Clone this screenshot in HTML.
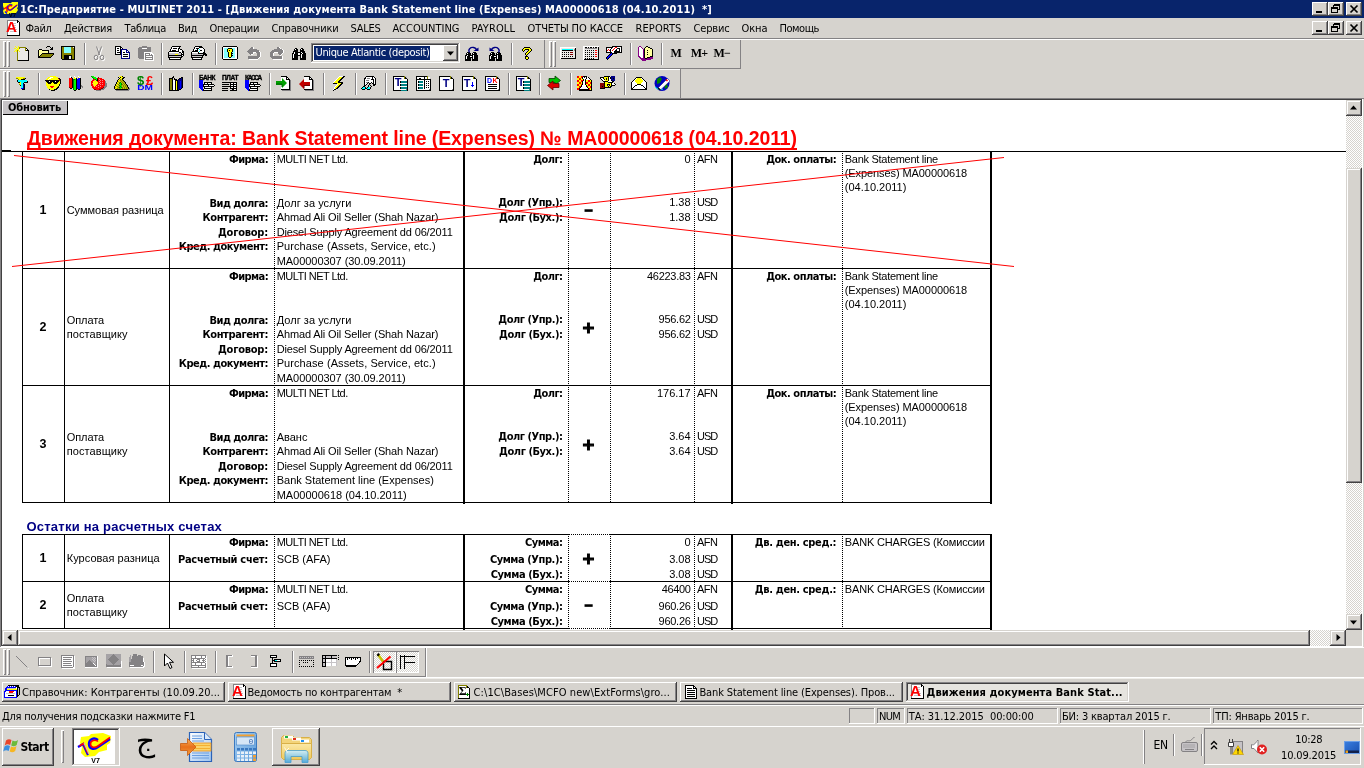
<!DOCTYPE html>
<html><head><meta charset="utf-8"><title>1C</title><style>
html,body{margin:0;padding:0;}
body{width:1364px;height:768px;overflow:hidden;background:#d6d3ce;position:relative;font-family:'DejaVu Sans Condensed','DejaVu Sans','Liberation Sans',sans-serif;font-size:11px;}
.t{position:absolute;white-space:pre;color:#000;}
.r{position:absolute;}
#root{position:absolute;left:0;top:0;width:1364px;height:768px;will-change:transform;}
svg{position:absolute;overflow:visible;}
.raised{box-shadow:inset -1px -1px #424142,inset 1px 1px #fff,inset -2px -2px #848284,inset 2px 2px #d6d3ce;}
.sunken{box-shadow:inset -1px -1px #fff,inset 1px 1px #848284,inset -2px -2px #d6d3ce,inset 2px 2px #424142;}
.sbr{box-shadow:inset -1px -1px #424142,inset 1px 1px #d6d3ce,inset -2px -2px #848284,inset 2px 2px #fff;}
.thinr{box-shadow:inset -1px -1px #848284,inset 1px 1px #fff;}
.thins{box-shadow:inset -1px -1px #fff,inset 1px 1px #848284;}
</style></head><body><div id="root">
<div class="r" style="left:0px;top:0px;width:1364px;height:18px;background:#08246b;"></div>
<span class="t" style="left:20.00px;top:1.70px;line-height:15px;font-size:11px;font-weight:bold;font-family:'DejaVu Sans Condensed','DejaVu Sans','Liberation Sans',sans-serif;color:#fff;letter-spacing:0.097px;">1C:Предприятие - MULTINET 2011 - [Движения документа Bank Statement line (Expenses) MA00000618 (04.10.2011)  *]</span>
<div class="r raised" style="left:1312px;top:2px;width:16px;height:14px;background:#d6d3ce;"></div>
<div class="r" style="left:1316px;top:11px;width:6px;height:2px;background:#000;"></div>
<div class="r raised" style="left:1328px;top:2px;width:16px;height:14px;background:#d6d3ce;"></div>
<svg style="left:1328px;top:2px" width="16" height="14" shape-rendering="crispEdges"><path d="M5.5 2.5h6v5h-2M5.5 3.5h6M5.5 2.5v2" stroke="#000" fill="none"/><path d="M3.5 5.5h6v5h-6zM3.5 6.5h6" stroke="#000" fill="none"/></svg>
<div class="r raised" style="left:1346px;top:2px;width:16px;height:14px;background:#d6d3ce;"></div>
<svg style="left:1346px;top:2px" width="16" height="14"><path d="M4.5 3.5l7 7M11.5 3.5l-7 7" stroke="#000" stroke-width="1.7" fill="none"/></svg>
<div class="r raised" style="left:1312px;top:21px;width:16px;height:14px;background:#d6d3ce;"></div>
<div class="r" style="left:1316px;top:30px;width:6px;height:2px;background:#000;"></div>
<div class="r raised" style="left:1328px;top:21px;width:16px;height:14px;background:#d6d3ce;"></div>
<svg style="left:1328px;top:21px" width="16" height="14" shape-rendering="crispEdges"><path d="M5.5 2.5h6v5h-2M5.5 3.5h6M5.5 2.5v2" stroke="#000" fill="none"/><path d="M3.5 5.5h6v5h-6zM3.5 6.5h6" stroke="#000" fill="none"/></svg>
<div class="r raised" style="left:1346px;top:21px;width:16px;height:14px;background:#d6d3ce;"></div>
<svg style="left:1346px;top:21px" width="16" height="14"><path d="M4.5 3.5l7 7M11.5 3.5l-7 7" stroke="#000" stroke-width="1.7" fill="none"/></svg>
<span class="t" style="left:25.50px;top:20.80px;line-height:15px;font-size:11px;font-family:'DejaVu Sans Condensed','DejaVu Sans','Liberation Sans',sans-serif;letter-spacing:-0.336px;">Файл</span>
<span class="t" style="left:64.00px;top:20.80px;line-height:15px;font-size:11px;font-family:'DejaVu Sans Condensed','DejaVu Sans','Liberation Sans',sans-serif;letter-spacing:-0.209px;">Действия</span>
<span class="t" style="left:124.50px;top:20.80px;line-height:15px;font-size:11px;font-family:'DejaVu Sans Condensed','DejaVu Sans','Liberation Sans',sans-serif;letter-spacing:-0.324px;">Таблица</span>
<span class="t" style="left:178.00px;top:20.80px;line-height:15px;font-size:11px;font-family:'DejaVu Sans Condensed','DejaVu Sans','Liberation Sans',sans-serif;letter-spacing:-0.354px;">Вид</span>
<span class="t" style="left:209.50px;top:20.80px;line-height:15px;font-size:11px;font-family:'DejaVu Sans Condensed','DejaVu Sans','Liberation Sans',sans-serif;letter-spacing:-0.350px;">Операции</span>
<span class="t" style="left:271.50px;top:20.80px;line-height:15px;font-size:11px;font-family:'DejaVu Sans Condensed','DejaVu Sans','Liberation Sans',sans-serif;letter-spacing:-0.162px;">Справочники</span>
<span class="t" style="left:350.50px;top:20.80px;line-height:15px;font-size:11px;font-family:'DejaVu Sans Condensed','DejaVu Sans','Liberation Sans',sans-serif;letter-spacing:-0.263px;">SALES</span>
<span class="t" style="left:392.50px;top:20.80px;line-height:15px;font-size:11px;font-family:'DejaVu Sans Condensed','DejaVu Sans','Liberation Sans',sans-serif;letter-spacing:0.013px;">ACCOUNTING</span>
<span class="t" style="left:471.50px;top:20.80px;line-height:15px;font-size:11px;font-family:'DejaVu Sans Condensed','DejaVu Sans','Liberation Sans',sans-serif;letter-spacing:0.085px;">PAYROLL</span>
<span class="t" style="left:527.50px;top:20.80px;line-height:15px;font-size:11px;font-family:'DejaVu Sans Condensed','DejaVu Sans','Liberation Sans',sans-serif;letter-spacing:-0.102px;">ОТЧЕТЫ ПО КАССЕ</span>
<span class="t" style="left:635.50px;top:20.80px;line-height:15px;font-size:11px;font-family:'DejaVu Sans Condensed','DejaVu Sans','Liberation Sans',sans-serif;letter-spacing:0.100px;">REPORTS</span>
<span class="t" style="left:693.50px;top:20.80px;line-height:15px;font-size:11px;font-family:'DejaVu Sans Condensed','DejaVu Sans','Liberation Sans',sans-serif;letter-spacing:-0.167px;">Сервис</span>
<span class="t" style="left:741.50px;top:20.80px;line-height:15px;font-size:11px;font-family:'DejaVu Sans Condensed','DejaVu Sans','Liberation Sans',sans-serif;letter-spacing:-0.078px;">Окна</span>
<span class="t" style="left:779.50px;top:20.80px;line-height:15px;font-size:11px;font-family:'DejaVu Sans Condensed','DejaVu Sans','Liberation Sans',sans-serif;letter-spacing:-0.448px;">Помощь</span>
<div class="r" style="left:0px;top:38px;width:1364px;height:1px;background:#848284;"></div>
<div class="r" style="left:0px;top:39px;width:1364px;height:1px;background:#fff;"></div>
<div class="r" style="left:3px;top:41px;width:3px;height:26px;background:#d6d3ce;box-shadow:inset 1px 1px #fff,inset -1px -1px #848284;"></div>
<div class="r" style="left:7px;top:41px;width:3px;height:26px;background:#d6d3ce;box-shadow:inset 1px 1px #fff,inset -1px -1px #848284;"></div>
<div class="r" style="left:84px;top:43px;width:1px;height:22px;background:#848284;"></div>
<div class="r" style="left:85px;top:43px;width:1px;height:22px;background:#fff;"></div>
<div class="r" style="left:161px;top:43px;width:1px;height:22px;background:#848284;"></div>
<div class="r" style="left:162px;top:43px;width:1px;height:22px;background:#fff;"></div>
<div class="r" style="left:215px;top:43px;width:1px;height:22px;background:#848284;"></div>
<div class="r" style="left:216px;top:43px;width:1px;height:22px;background:#fff;"></div>
<div class="r" style="left:511px;top:43px;width:1px;height:22px;background:#848284;"></div>
<div class="r" style="left:512px;top:43px;width:1px;height:22px;background:#fff;"></div>
<div class="r" style="left:544px;top:40px;width:1px;height:28px;background:#848284;"></div>
<div class="r" style="left:549px;top:41px;width:3px;height:26px;background:#d6d3ce;box-shadow:inset 1px 1px #fff,inset -1px -1px #848284;"></div>
<div class="r" style="left:553px;top:41px;width:3px;height:26px;background:#d6d3ce;box-shadow:inset 1px 1px #fff,inset -1px -1px #848284;"></div>
<div class="r" style="left:630px;top:43px;width:1px;height:22px;background:#848284;"></div>
<div class="r" style="left:631px;top:43px;width:1px;height:22px;background:#fff;"></div>
<div class="r" style="left:661px;top:43px;width:1px;height:22px;background:#848284;"></div>
<div class="r" style="left:662px;top:43px;width:1px;height:22px;background:#fff;"></div>
<div class="r" style="left:740px;top:40px;width:1px;height:29px;background:#848284;"></div>
<div class="r" style="left:0px;top:68px;width:741px;height:1px;background:#848284;"></div>
<div class="r" style="left:0px;top:69px;width:680px;height:1px;background:#fff;"></div>
<div class="r" style="left:3px;top:71px;width:3px;height:26px;background:#d6d3ce;box-shadow:inset 1px 1px #fff,inset -1px -1px #848284;"></div>
<div class="r" style="left:7px;top:71px;width:3px;height:26px;background:#d6d3ce;box-shadow:inset 1px 1px #fff,inset -1px -1px #848284;"></div>
<div class="r" style="left:38px;top:73px;width:1px;height:22px;background:#848284;"></div>
<div class="r" style="left:39px;top:73px;width:1px;height:22px;background:#fff;"></div>
<div class="r" style="left:161px;top:73px;width:1px;height:22px;background:#848284;"></div>
<div class="r" style="left:162px;top:73px;width:1px;height:22px;background:#fff;"></div>
<div class="r" style="left:192px;top:73px;width:1px;height:22px;background:#848284;"></div>
<div class="r" style="left:193px;top:73px;width:1px;height:22px;background:#fff;"></div>
<div class="r" style="left:269px;top:73px;width:1px;height:22px;background:#848284;"></div>
<div class="r" style="left:270px;top:73px;width:1px;height:22px;background:#fff;"></div>
<div class="r" style="left:323px;top:73px;width:1px;height:22px;background:#848284;"></div>
<div class="r" style="left:324px;top:73px;width:1px;height:22px;background:#fff;"></div>
<div class="r" style="left:355px;top:73px;width:1px;height:22px;background:#848284;"></div>
<div class="r" style="left:356px;top:73px;width:1px;height:22px;background:#fff;"></div>
<div class="r" style="left:385px;top:73px;width:1px;height:22px;background:#848284;"></div>
<div class="r" style="left:386px;top:73px;width:1px;height:22px;background:#fff;"></div>
<div class="r" style="left:508px;top:73px;width:1px;height:22px;background:#848284;"></div>
<div class="r" style="left:509px;top:73px;width:1px;height:22px;background:#fff;"></div>
<div class="r" style="left:539px;top:73px;width:1px;height:22px;background:#848284;"></div>
<div class="r" style="left:540px;top:73px;width:1px;height:22px;background:#fff;"></div>
<div class="r" style="left:570px;top:73px;width:1px;height:22px;background:#848284;"></div>
<div class="r" style="left:571px;top:73px;width:1px;height:22px;background:#fff;"></div>
<div class="r" style="left:624px;top:73px;width:1px;height:22px;background:#848284;"></div>
<div class="r" style="left:625px;top:73px;width:1px;height:22px;background:#fff;"></div>
<div class="r" style="left:680px;top:69px;width:1px;height:29px;background:#848284;"></div>
<div class="r" style="left:0px;top:98px;width:1364px;height:1px;background:#848284;"></div>
<div class="r" style="left:0px;top:98px;width:1364px;height:1px;background:#848284;"></div>
<div class="r" style="left:0px;top:99px;width:1363px;height:1px;background:#424142;"></div>
<div class="r" style="left:0px;top:98px;width:1px;height:549px;background:#848284;"></div>
<div class="r" style="left:1px;top:99px;width:1px;height:547px;background:#424142;"></div>
<div class="r" style="left:2px;top:100px;width:1344px;height:530px;background:#fff;"></div>
<div class="r" style="left:1362px;top:99px;width:1px;height:548px;background:#fff;"></div>
<div class="r" style="left:1px;top:646px;width:1362px;height:1px;background:#fff;"></div>
<div class="r" style="left:2px;top:100px;width:66px;height:15px;background:#c6c3c6;box-shadow:inset 1px 1px #fff,inset -1px -1px #000;"></div>
<span class="t" style="left:8.00px;top:99.70px;line-height:15px;font-size:11px;font-weight:bold;font-family:'DejaVu Sans Condensed','DejaVu Sans','Liberation Sans',sans-serif;letter-spacing:-0.145px;">Обновить</span>
<span class="t" style="left:27.00px;top:127.45px;line-height:23.5px;font-size:19.5px;font-weight:bold;font-family:'Liberation Sans',sans-serif;color:#f00;letter-spacing:-0.096px;">Движения документа: Bank Statement line (Expenses) № MA00000618 (04.10.2011)</span>
<div class="r" style="left:27px;top:148px;width:770px;height:2px;background:#f00;"></div>
<div class="r" style="left:2px;top:151px;width:1344px;height:1px;background:#000;"></div>
<div class="r" style="left:2px;top:150px;width:9px;height:2px;background:#000;"></div>
<div class="r" style="left:22px;top:151px;width:1px;height:352px;background:#000;"></div>
<div class="r" style="left:64px;top:151px;width:1px;height:352px;background:#000;"></div>
<div class="r" style="left:169px;top:151px;width:1px;height:352px;background:#000;"></div>
<div class="r" style="left:463px;top:151px;width:2px;height:353px;background:#000;"></div>
<div class="r" style="left:731px;top:151px;width:2px;height:353px;background:#000;"></div>
<div class="r" style="left:990px;top:151px;width:2px;height:353px;background:#000;"></div>
<div class="r" style="left:274px;top:151px;width:1px;height:352px;background:repeating-linear-gradient(to bottom,#000 0 1px,#fff 1px 2px);"></div>
<div class="r" style="left:568px;top:151px;width:1px;height:352px;background:repeating-linear-gradient(to bottom,#000 0 1px,#fff 1px 2px);"></div>
<div class="r" style="left:610px;top:151px;width:1px;height:352px;background:repeating-linear-gradient(to bottom,#000 0 1px,#fff 1px 2px);"></div>
<div class="r" style="left:694px;top:151px;width:1px;height:352px;background:repeating-linear-gradient(to bottom,#000 0 1px,#fff 1px 2px);"></div>
<div class="r" style="left:842px;top:151px;width:1px;height:352px;background:repeating-linear-gradient(to bottom,#000 0 1px,#fff 1px 2px);"></div>
<div class="r" style="left:22px;top:268px;width:970px;height:1px;background:#000;"></div>
<div class="r" style="left:22px;top:385px;width:970px;height:1px;background:#000;"></div>
<div class="r" style="left:22px;top:502px;width:970px;height:1px;background:#000;"></div>
<div class="r" style="left:22px;top:151px;width:970px;height:1px;background:#000;"></div>
<span class="t" style="left:39.42px;top:202.05px;line-height:16.5px;font-size:12.5px;font-weight:bold;font-family:'Liberation Sans',sans-serif;">1</span>
<span class="t" style="left:66.70px;top:202.80px;line-height:15px;font-size:11px;font-family:'Liberation Sans',sans-serif;letter-spacing:-0.014px;">Суммовая разница</span>
<span class="t" style="left:229.00px;top:151.80px;line-height:15px;font-size:11px;font-weight:bold;font-family:'DejaVu Sans Condensed','DejaVu Sans','Liberation Sans',sans-serif;letter-spacing:-0.594px;">Фирма:</span>
<span class="t" style="left:276.70px;top:151.80px;line-height:15px;font-size:11px;font-family:'Liberation Sans',sans-serif;letter-spacing:-0.532px;">MULTI NET Ltd.</span>
<span class="t" style="left:209.60px;top:195.60px;line-height:15px;font-size:11px;font-weight:bold;font-family:'DejaVu Sans Condensed','DejaVu Sans','Liberation Sans',sans-serif;letter-spacing:-0.537px;">Вид долга:</span>
<span class="t" style="left:276.70px;top:195.60px;line-height:15px;font-size:11px;font-family:'Liberation Sans',sans-serif;letter-spacing:0.042px;">Долг за услуги</span>
<span class="t" style="left:202.50px;top:210.20px;line-height:15px;font-size:11px;font-weight:bold;font-family:'DejaVu Sans Condensed','DejaVu Sans','Liberation Sans',sans-serif;letter-spacing:-0.378px;">Контрагент:</span>
<span class="t" style="left:276.70px;top:210.20px;line-height:15px;font-size:11px;font-family:'Liberation Sans',sans-serif;letter-spacing:-0.124px;">Ahmad Ali Oil Seller (Shah Nazar)</span>
<span class="t" style="left:218.00px;top:224.80px;line-height:15px;font-size:11px;font-weight:bold;font-family:'DejaVu Sans Condensed','DejaVu Sans','Liberation Sans',sans-serif;letter-spacing:-0.213px;">Договор:</span>
<span class="t" style="left:276.70px;top:224.80px;line-height:15px;font-size:11px;font-family:'Liberation Sans',sans-serif;letter-spacing:-0.144px;">Diesel Supply Agreement dd 06/2011</span>
<span class="t" style="left:178.80px;top:239.40px;line-height:15px;font-size:11px;font-weight:bold;font-family:'DejaVu Sans Condensed','DejaVu Sans','Liberation Sans',sans-serif;letter-spacing:-0.479px;">Кред. документ:</span>
<span class="t" style="left:276.70px;top:239.40px;line-height:15px;font-size:11px;font-family:'Liberation Sans',sans-serif;letter-spacing:0.078px;">Purchase (Assets, Service, etc.)</span>
<span class="t" style="left:276.70px;top:254.00px;line-height:15px;font-size:11px;font-family:'Liberation Sans',sans-serif;letter-spacing:-0.046px;">MA00000307 (30.09.2011)</span>
<span class="t" style="left:533.20px;top:151.80px;line-height:15px;font-size:11px;font-weight:bold;font-family:'DejaVu Sans Condensed','DejaVu Sans','Liberation Sans',sans-serif;letter-spacing:-0.540px;">Долг:</span>
<span class="t" style="left:498.30px;top:195.30px;line-height:15px;font-size:11px;font-weight:bold;font-family:'DejaVu Sans Condensed','DejaVu Sans','Liberation Sans',sans-serif;letter-spacing:-0.468px;">Долг (Упр.):</span>
<span class="t" style="left:499.10px;top:209.90px;line-height:15px;font-size:11px;font-weight:bold;font-family:'DejaVu Sans Condensed','DejaVu Sans','Liberation Sans',sans-serif;letter-spacing:-0.435px;">Долг (Бух.):</span>
<span class="t" style="left:684.48px;top:151.80px;line-height:15px;font-size:11px;font-family:'Liberation Sans',sans-serif;">0</span>
<span class="t" style="left:669.18px;top:195.30px;line-height:15px;font-size:11px;font-family:'Liberation Sans',sans-serif;">1.38</span>
<span class="t" style="left:669.18px;top:209.90px;line-height:15px;font-size:11px;font-family:'Liberation Sans',sans-serif;">1.38</span>
<span class="t" style="left:697.00px;top:151.80px;line-height:15px;font-size:11px;font-family:'Liberation Sans',sans-serif;letter-spacing:-0.533px;">AFN</span>
<span class="t" style="left:697.00px;top:195.30px;line-height:15px;font-size:11px;font-family:'Liberation Sans',sans-serif;letter-spacing:-1.011px;">USD</span>
<span class="t" style="left:697.00px;top:209.90px;line-height:15px;font-size:11px;font-family:'Liberation Sans',sans-serif;letter-spacing:-1.011px;">USD</span>
<span class="t" style="left:583.89px;top:203.30px;line-height:15px;font-size:11px;font-weight:bold;font-family:'DejaVu Sans',sans-serif;-webkit-text-stroke:1.3px #000;">−</span>
<span class="t" style="left:766.20px;top:151.80px;line-height:15px;font-size:11px;font-weight:bold;font-family:'DejaVu Sans Condensed','DejaVu Sans','Liberation Sans',sans-serif;letter-spacing:-0.479px;">Док. оплаты:</span>
<span class="t" style="left:844.80px;top:151.80px;line-height:15px;font-size:11px;font-family:'Liberation Sans',sans-serif;letter-spacing:-0.287px;">Bank Statement line</span>
<span class="t" style="left:844.80px;top:165.80px;line-height:15px;font-size:11px;font-family:'Liberation Sans',sans-serif;letter-spacing:-0.088px;">(Expenses) MA00000618</span>
<span class="t" style="left:844.80px;top:179.80px;line-height:15px;font-size:11px;font-family:'Liberation Sans',sans-serif;letter-spacing:0.002px;">(04.10.2011)</span>
<span class="t" style="left:39.42px;top:319.05px;line-height:16.5px;font-size:12.5px;font-weight:bold;font-family:'Liberation Sans',sans-serif;">2</span>
<span class="t" style="left:66.70px;top:312.80px;line-height:15px;font-size:11px;font-family:'Liberation Sans',sans-serif;letter-spacing:-0.057px;">Оплата</span>
<span class="t" style="left:66.70px;top:326.80px;line-height:15px;font-size:11px;font-family:'Liberation Sans',sans-serif;letter-spacing:0.091px;">поставщику</span>
<span class="t" style="left:229.00px;top:268.80px;line-height:15px;font-size:11px;font-weight:bold;font-family:'DejaVu Sans Condensed','DejaVu Sans','Liberation Sans',sans-serif;letter-spacing:-0.594px;">Фирма:</span>
<span class="t" style="left:276.70px;top:268.80px;line-height:15px;font-size:11px;font-family:'Liberation Sans',sans-serif;letter-spacing:-0.532px;">MULTI NET Ltd.</span>
<span class="t" style="left:209.60px;top:312.60px;line-height:15px;font-size:11px;font-weight:bold;font-family:'DejaVu Sans Condensed','DejaVu Sans','Liberation Sans',sans-serif;letter-spacing:-0.537px;">Вид долга:</span>
<span class="t" style="left:276.70px;top:312.60px;line-height:15px;font-size:11px;font-family:'Liberation Sans',sans-serif;letter-spacing:0.042px;">Долг за услуги</span>
<span class="t" style="left:202.50px;top:327.20px;line-height:15px;font-size:11px;font-weight:bold;font-family:'DejaVu Sans Condensed','DejaVu Sans','Liberation Sans',sans-serif;letter-spacing:-0.378px;">Контрагент:</span>
<span class="t" style="left:276.70px;top:327.20px;line-height:15px;font-size:11px;font-family:'Liberation Sans',sans-serif;letter-spacing:-0.124px;">Ahmad Ali Oil Seller (Shah Nazar)</span>
<span class="t" style="left:218.00px;top:341.80px;line-height:15px;font-size:11px;font-weight:bold;font-family:'DejaVu Sans Condensed','DejaVu Sans','Liberation Sans',sans-serif;letter-spacing:-0.213px;">Договор:</span>
<span class="t" style="left:276.70px;top:341.80px;line-height:15px;font-size:11px;font-family:'Liberation Sans',sans-serif;letter-spacing:-0.144px;">Diesel Supply Agreement dd 06/2011</span>
<span class="t" style="left:178.80px;top:356.40px;line-height:15px;font-size:11px;font-weight:bold;font-family:'DejaVu Sans Condensed','DejaVu Sans','Liberation Sans',sans-serif;letter-spacing:-0.479px;">Кред. документ:</span>
<span class="t" style="left:276.70px;top:356.40px;line-height:15px;font-size:11px;font-family:'Liberation Sans',sans-serif;letter-spacing:0.078px;">Purchase (Assets, Service, etc.)</span>
<span class="t" style="left:276.70px;top:371.00px;line-height:15px;font-size:11px;font-family:'Liberation Sans',sans-serif;letter-spacing:-0.046px;">MA00000307 (30.09.2011)</span>
<span class="t" style="left:533.20px;top:268.80px;line-height:15px;font-size:11px;font-weight:bold;font-family:'DejaVu Sans Condensed','DejaVu Sans','Liberation Sans',sans-serif;letter-spacing:-0.540px;">Долг:</span>
<span class="t" style="left:498.30px;top:312.30px;line-height:15px;font-size:11px;font-weight:bold;font-family:'DejaVu Sans Condensed','DejaVu Sans','Liberation Sans',sans-serif;letter-spacing:-0.468px;">Долг (Упр.):</span>
<span class="t" style="left:499.10px;top:326.90px;line-height:15px;font-size:11px;font-weight:bold;font-family:'DejaVu Sans Condensed','DejaVu Sans','Liberation Sans',sans-serif;letter-spacing:-0.435px;">Долг (Бух.):</span>
<span class="t" style="left:647.00px;top:268.80px;line-height:15px;font-size:11px;font-family:'Liberation Sans',sans-serif;letter-spacing:-0.286px;">46223.83</span>
<span class="t" style="left:658.60px;top:312.30px;line-height:15px;font-size:11px;font-family:'Liberation Sans',sans-serif;letter-spacing:-0.276px;">956.62</span>
<span class="t" style="left:658.60px;top:326.90px;line-height:15px;font-size:11px;font-family:'Liberation Sans',sans-serif;letter-spacing:-0.276px;">956.62</span>
<span class="t" style="left:697.00px;top:268.80px;line-height:15px;font-size:11px;font-family:'Liberation Sans',sans-serif;letter-spacing:-0.533px;">AFN</span>
<span class="t" style="left:697.00px;top:312.30px;line-height:15px;font-size:11px;font-family:'Liberation Sans',sans-serif;letter-spacing:-1.011px;">USD</span>
<span class="t" style="left:697.00px;top:326.90px;line-height:15px;font-size:11px;font-family:'Liberation Sans',sans-serif;letter-spacing:-1.011px;">USD</span>
<span class="t" style="left:581.80px;top:317.80px;line-height:20px;font-size:16px;font-weight:bold;font-family:'DejaVu Sans',sans-serif;-webkit-text-stroke:1.1px #000;">+</span>
<span class="t" style="left:766.20px;top:268.80px;line-height:15px;font-size:11px;font-weight:bold;font-family:'DejaVu Sans Condensed','DejaVu Sans','Liberation Sans',sans-serif;letter-spacing:-0.479px;">Док. оплаты:</span>
<span class="t" style="left:844.80px;top:268.80px;line-height:15px;font-size:11px;font-family:'Liberation Sans',sans-serif;letter-spacing:-0.287px;">Bank Statement line</span>
<span class="t" style="left:844.80px;top:282.80px;line-height:15px;font-size:11px;font-family:'Liberation Sans',sans-serif;letter-spacing:-0.088px;">(Expenses) MA00000618</span>
<span class="t" style="left:844.80px;top:296.80px;line-height:15px;font-size:11px;font-family:'Liberation Sans',sans-serif;letter-spacing:0.002px;">(04.10.2011)</span>
<span class="t" style="left:39.42px;top:436.05px;line-height:16.5px;font-size:12.5px;font-weight:bold;font-family:'Liberation Sans',sans-serif;">3</span>
<span class="t" style="left:66.70px;top:429.80px;line-height:15px;font-size:11px;font-family:'Liberation Sans',sans-serif;letter-spacing:-0.057px;">Оплата</span>
<span class="t" style="left:66.70px;top:443.80px;line-height:15px;font-size:11px;font-family:'Liberation Sans',sans-serif;letter-spacing:0.091px;">поставщику</span>
<span class="t" style="left:229.00px;top:385.80px;line-height:15px;font-size:11px;font-weight:bold;font-family:'DejaVu Sans Condensed','DejaVu Sans','Liberation Sans',sans-serif;letter-spacing:-0.594px;">Фирма:</span>
<span class="t" style="left:276.70px;top:385.80px;line-height:15px;font-size:11px;font-family:'Liberation Sans',sans-serif;letter-spacing:-0.532px;">MULTI NET Ltd.</span>
<span class="t" style="left:209.60px;top:429.60px;line-height:15px;font-size:11px;font-weight:bold;font-family:'DejaVu Sans Condensed','DejaVu Sans','Liberation Sans',sans-serif;letter-spacing:-0.537px;">Вид долга:</span>
<span class="t" style="left:276.70px;top:429.60px;line-height:15px;font-size:11px;font-family:'Liberation Sans',sans-serif;">Аванс</span>
<span class="t" style="left:202.50px;top:444.20px;line-height:15px;font-size:11px;font-weight:bold;font-family:'DejaVu Sans Condensed','DejaVu Sans','Liberation Sans',sans-serif;letter-spacing:-0.378px;">Контрагент:</span>
<span class="t" style="left:276.70px;top:444.20px;line-height:15px;font-size:11px;font-family:'Liberation Sans',sans-serif;letter-spacing:-0.124px;">Ahmad Ali Oil Seller (Shah Nazar)</span>
<span class="t" style="left:218.00px;top:458.80px;line-height:15px;font-size:11px;font-weight:bold;font-family:'DejaVu Sans Condensed','DejaVu Sans','Liberation Sans',sans-serif;letter-spacing:-0.213px;">Договор:</span>
<span class="t" style="left:276.70px;top:458.80px;line-height:15px;font-size:11px;font-family:'Liberation Sans',sans-serif;letter-spacing:-0.144px;">Diesel Supply Agreement dd 06/2011</span>
<span class="t" style="left:178.80px;top:473.40px;line-height:15px;font-size:11px;font-weight:bold;font-family:'DejaVu Sans Condensed','DejaVu Sans','Liberation Sans',sans-serif;letter-spacing:-0.479px;">Кред. документ:</span>
<span class="t" style="left:276.70px;top:473.40px;line-height:15px;font-size:11px;font-family:'Liberation Sans',sans-serif;">Bank Statement line (Expenses)</span>
<span class="t" style="left:276.70px;top:488.00px;line-height:15px;font-size:11px;font-family:'Liberation Sans',sans-serif;">MA00000618 (04.10.2011)</span>
<span class="t" style="left:533.20px;top:385.80px;line-height:15px;font-size:11px;font-weight:bold;font-family:'DejaVu Sans Condensed','DejaVu Sans','Liberation Sans',sans-serif;letter-spacing:-0.540px;">Долг:</span>
<span class="t" style="left:498.30px;top:429.30px;line-height:15px;font-size:11px;font-weight:bold;font-family:'DejaVu Sans Condensed','DejaVu Sans','Liberation Sans',sans-serif;letter-spacing:-0.468px;">Долг (Упр.):</span>
<span class="t" style="left:499.10px;top:443.90px;line-height:15px;font-size:11px;font-weight:bold;font-family:'DejaVu Sans Condensed','DejaVu Sans','Liberation Sans',sans-serif;letter-spacing:-0.435px;">Долг (Бух.):</span>
<span class="t" style="left:656.94px;top:385.80px;line-height:15px;font-size:11px;font-family:'Liberation Sans',sans-serif;">176.17</span>
<span class="t" style="left:669.18px;top:429.30px;line-height:15px;font-size:11px;font-family:'Liberation Sans',sans-serif;">3.64</span>
<span class="t" style="left:669.18px;top:443.90px;line-height:15px;font-size:11px;font-family:'Liberation Sans',sans-serif;">3.64</span>
<span class="t" style="left:697.00px;top:385.80px;line-height:15px;font-size:11px;font-family:'Liberation Sans',sans-serif;letter-spacing:-0.533px;">AFN</span>
<span class="t" style="left:697.00px;top:429.30px;line-height:15px;font-size:11px;font-family:'Liberation Sans',sans-serif;letter-spacing:-1.011px;">USD</span>
<span class="t" style="left:697.00px;top:443.90px;line-height:15px;font-size:11px;font-family:'Liberation Sans',sans-serif;letter-spacing:-1.011px;">USD</span>
<span class="t" style="left:581.80px;top:434.80px;line-height:20px;font-size:16px;font-weight:bold;font-family:'DejaVu Sans',sans-serif;-webkit-text-stroke:1.1px #000;">+</span>
<span class="t" style="left:766.20px;top:385.80px;line-height:15px;font-size:11px;font-weight:bold;font-family:'DejaVu Sans Condensed','DejaVu Sans','Liberation Sans',sans-serif;letter-spacing:-0.479px;">Док. оплаты:</span>
<span class="t" style="left:844.80px;top:385.80px;line-height:15px;font-size:11px;font-family:'Liberation Sans',sans-serif;letter-spacing:-0.287px;">Bank Statement line</span>
<span class="t" style="left:844.80px;top:399.80px;line-height:15px;font-size:11px;font-family:'Liberation Sans',sans-serif;letter-spacing:-0.088px;">(Expenses) MA00000618</span>
<span class="t" style="left:844.80px;top:413.80px;line-height:15px;font-size:11px;font-family:'Liberation Sans',sans-serif;letter-spacing:0.002px;">(04.10.2011)</span>
<svg style="left:0;top:0" width="1364" height="768"><path d="M14 155.5L1014 266.5M12 266.5L1004 157.5" stroke="#f00" stroke-width="1" fill="none"/></svg>
<span class="t" style="left:26.40px;top:518.20px;line-height:17px;font-size:13px;font-weight:bold;font-family:'Liberation Sans',sans-serif;color:#000084;letter-spacing:0.238px;">Остатки на расчетных счетах</span>
<div class="r" style="left:22px;top:534px;width:1px;height:95px;background:#000;"></div>
<div class="r" style="left:64px;top:534px;width:1px;height:95px;background:#000;"></div>
<div class="r" style="left:169px;top:534px;width:1px;height:95px;background:#000;"></div>
<div class="r" style="left:463px;top:534px;width:2px;height:96px;background:#000;"></div>
<div class="r" style="left:731px;top:534px;width:2px;height:96px;background:#000;"></div>
<div class="r" style="left:990px;top:534px;width:2px;height:96px;background:#000;"></div>
<div class="r" style="left:274px;top:534px;width:1px;height:95px;background:repeating-linear-gradient(to bottom,#000 0 1px,#fff 1px 2px);"></div>
<div class="r" style="left:568px;top:534px;width:1px;height:95px;background:repeating-linear-gradient(to bottom,#000 0 1px,#fff 1px 2px);"></div>
<div class="r" style="left:610px;top:534px;width:1px;height:95px;background:repeating-linear-gradient(to bottom,#000 0 1px,#fff 1px 2px);"></div>
<div class="r" style="left:694px;top:534px;width:1px;height:95px;background:repeating-linear-gradient(to bottom,#000 0 1px,#fff 1px 2px);"></div>
<div class="r" style="left:842px;top:534px;width:1px;height:95px;background:repeating-linear-gradient(to bottom,#000 0 1px,#fff 1px 2px);"></div>
<div class="r" style="left:22px;top:581px;width:970px;height:1px;background:#000;"></div>
<div class="r" style="left:22px;top:628px;width:970px;height:1px;background:#000;"></div>
<div class="r" style="left:22px;top:534px;width:970px;height:1px;background:#000;"></div>
<div class="r" style="left:569px;top:534px;width:41px;height:1px;background:repeating-linear-gradient(to right,#000 0 1px,#fff 1px 2px);"></div>
<div class="r" style="left:569px;top:581px;width:41px;height:1px;background:repeating-linear-gradient(to right,#000 0 1px,#fff 1px 2px);"></div>
<div class="r" style="left:569px;top:628px;width:41px;height:1px;background:repeating-linear-gradient(to right,#000 0 1px,#fff 1px 2px);"></div>
<span class="t" style="left:39.42px;top:550.05px;line-height:16.5px;font-size:12.5px;font-weight:bold;font-family:'Liberation Sans',sans-serif;">1</span>
<span class="t" style="left:66.70px;top:551.00px;line-height:15px;font-size:11px;font-family:'Liberation Sans',sans-serif;letter-spacing:0.044px;">Курсовая разница</span>
<span class="t" style="left:229.00px;top:534.80px;line-height:15px;font-size:11px;font-weight:bold;font-family:'DejaVu Sans Condensed','DejaVu Sans','Liberation Sans',sans-serif;letter-spacing:-0.594px;">Фирма:</span>
<span class="t" style="left:276.70px;top:534.80px;line-height:15px;font-size:11px;font-family:'Liberation Sans',sans-serif;letter-spacing:-0.532px;">MULTI NET Ltd.</span>
<span class="t" style="left:178.00px;top:551.80px;line-height:15px;font-size:11px;font-weight:bold;font-family:'DejaVu Sans Condensed','DejaVu Sans','Liberation Sans',sans-serif;letter-spacing:-0.285px;">Расчетный счет:</span>
<span class="t" style="left:276.70px;top:551.80px;line-height:15px;font-size:11px;font-family:'Liberation Sans',sans-serif;">SCB (AFA)</span>
<span class="t" style="left:525.00px;top:534.80px;line-height:15px;font-size:11px;font-weight:bold;font-family:'DejaVu Sans Condensed','DejaVu Sans','Liberation Sans',sans-serif;letter-spacing:-0.505px;">Сумма:</span>
<span class="t" style="left:489.90px;top:551.80px;line-height:15px;font-size:11px;font-weight:bold;font-family:'DejaVu Sans Condensed','DejaVu Sans','Liberation Sans',sans-serif;letter-spacing:-0.441px;">Сумма (Упр.):</span>
<span class="t" style="left:490.70px;top:566.80px;line-height:15px;font-size:11px;font-weight:bold;font-family:'DejaVu Sans Condensed','DejaVu Sans','Liberation Sans',sans-serif;letter-spacing:-0.412px;">Сумма (Бух.):</span>
<span class="t" style="left:684.48px;top:534.80px;line-height:15px;font-size:11px;font-family:'Liberation Sans',sans-serif;">0</span>
<span class="t" style="left:669.18px;top:551.80px;line-height:15px;font-size:11px;font-family:'Liberation Sans',sans-serif;">3.08</span>
<span class="t" style="left:669.18px;top:566.80px;line-height:15px;font-size:11px;font-family:'Liberation Sans',sans-serif;">3.08</span>
<span class="t" style="left:697.00px;top:534.80px;line-height:15px;font-size:11px;font-family:'Liberation Sans',sans-serif;letter-spacing:-0.533px;">AFN</span>
<span class="t" style="left:697.00px;top:551.80px;line-height:15px;font-size:11px;font-family:'Liberation Sans',sans-serif;letter-spacing:-1.011px;">USD</span>
<span class="t" style="left:697.00px;top:566.80px;line-height:15px;font-size:11px;font-family:'Liberation Sans',sans-serif;letter-spacing:-1.011px;">USD</span>
<span class="t" style="left:581.80px;top:548.80px;line-height:20px;font-size:16px;font-weight:bold;font-family:'DejaVu Sans',sans-serif;-webkit-text-stroke:1.1px #000;">+</span>
<span class="t" style="left:754.80px;top:534.80px;line-height:15px;font-size:11px;font-weight:bold;font-family:'DejaVu Sans Condensed','DejaVu Sans','Liberation Sans',sans-serif;letter-spacing:-0.334px;">Дв. ден. сред.:</span>
<span class="t" style="left:844.80px;top:534.80px;line-height:15px;font-size:11px;font-family:'Liberation Sans',sans-serif;letter-spacing:-0.166px;">BANK CHARGES (Комиссии</span>
<span class="t" style="left:39.42px;top:597.05px;line-height:16.5px;font-size:12.5px;font-weight:bold;font-family:'Liberation Sans',sans-serif;">2</span>
<span class="t" style="left:66.70px;top:591.00px;line-height:15px;font-size:11px;font-family:'Liberation Sans',sans-serif;letter-spacing:-0.057px;">Оплата</span>
<span class="t" style="left:66.70px;top:605.00px;line-height:15px;font-size:11px;font-family:'Liberation Sans',sans-serif;letter-spacing:0.091px;">поставщику</span>
<span class="t" style="left:229.00px;top:581.80px;line-height:15px;font-size:11px;font-weight:bold;font-family:'DejaVu Sans Condensed','DejaVu Sans','Liberation Sans',sans-serif;letter-spacing:-0.594px;">Фирма:</span>
<span class="t" style="left:276.70px;top:581.80px;line-height:15px;font-size:11px;font-family:'Liberation Sans',sans-serif;letter-spacing:-0.532px;">MULTI NET Ltd.</span>
<span class="t" style="left:178.00px;top:598.80px;line-height:15px;font-size:11px;font-weight:bold;font-family:'DejaVu Sans Condensed','DejaVu Sans','Liberation Sans',sans-serif;letter-spacing:-0.285px;">Расчетный счет:</span>
<span class="t" style="left:276.70px;top:598.80px;line-height:15px;font-size:11px;font-family:'Liberation Sans',sans-serif;">SCB (AFA)</span>
<span class="t" style="left:525.00px;top:581.80px;line-height:15px;font-size:11px;font-weight:bold;font-family:'DejaVu Sans Condensed','DejaVu Sans','Liberation Sans',sans-serif;letter-spacing:-0.505px;">Сумма:</span>
<span class="t" style="left:489.90px;top:598.80px;line-height:15px;font-size:11px;font-weight:bold;font-family:'DejaVu Sans Condensed','DejaVu Sans','Liberation Sans',sans-serif;letter-spacing:-0.441px;">Сумма (Упр.):</span>
<span class="t" style="left:490.70px;top:613.80px;line-height:15px;font-size:11px;font-weight:bold;font-family:'DejaVu Sans Condensed','DejaVu Sans','Liberation Sans',sans-serif;letter-spacing:-0.412px;">Сумма (Бух.):</span>
<span class="t" style="left:661.80px;top:581.80px;line-height:15px;font-size:11px;font-family:'Liberation Sans',sans-serif;letter-spacing:-0.359px;">46400</span>
<span class="t" style="left:658.60px;top:598.80px;line-height:15px;font-size:11px;font-family:'Liberation Sans',sans-serif;letter-spacing:-0.276px;">960.26</span>
<span class="t" style="left:658.60px;top:613.80px;line-height:15px;font-size:11px;font-family:'Liberation Sans',sans-serif;letter-spacing:-0.276px;">960.26</span>
<span class="t" style="left:697.00px;top:581.80px;line-height:15px;font-size:11px;font-family:'Liberation Sans',sans-serif;letter-spacing:-0.533px;">AFN</span>
<span class="t" style="left:697.00px;top:598.80px;line-height:15px;font-size:11px;font-family:'Liberation Sans',sans-serif;letter-spacing:-1.011px;">USD</span>
<span class="t" style="left:697.00px;top:613.80px;line-height:15px;font-size:11px;font-family:'Liberation Sans',sans-serif;letter-spacing:-1.011px;">USD</span>
<span class="t" style="left:583.89px;top:598.30px;line-height:15px;font-size:11px;font-weight:bold;font-family:'DejaVu Sans',sans-serif;-webkit-text-stroke:1.3px #000;">−</span>
<span class="t" style="left:754.80px;top:581.80px;line-height:15px;font-size:11px;font-weight:bold;font-family:'DejaVu Sans Condensed','DejaVu Sans','Liberation Sans',sans-serif;letter-spacing:-0.334px;">Дв. ден. сред.:</span>
<span class="t" style="left:844.80px;top:581.80px;line-height:15px;font-size:11px;font-family:'Liberation Sans',sans-serif;letter-spacing:-0.166px;">BANK CHARGES (Комиссии</span>
<div class="r" style="left:1346px;top:100px;width:16px;height:530px;background:#fff;background:repeating-conic-gradient(#fff 0 25%,#d6d3ce 0 50%) 0 0/2px 2px;"></div>
<div class="r sbr" style="left:1346px;top:100px;width:16px;height:16px;background:#d6d3ce;"></div>
<svg style="left:1346px;top:100px" width="16" height="16"><path d="M4 9.5h7l-3.5-4z" fill="#000"/></svg>
<div class="r sbr" style="left:1346px;top:614px;width:16px;height:16px;background:#d6d3ce;"></div>
<svg style="left:1346px;top:614px" width="16" height="16"><path d="M4 6.5h7l-3.5 4z" fill="#000"/></svg>
<div class="r sbr" style="left:1346px;top:168px;width:16px;height:315px;background:#d6d3ce;"></div>
<div class="r" style="left:2px;top:630px;width:1344px;height:16px;background:#fff;background:repeating-conic-gradient(#fff 0 25%,#d6d3ce 0 50%) 0 0/2px 2px;"></div>
<div class="r sbr" style="left:2px;top:630px;width:16px;height:16px;background:#d6d3ce;"></div>
<svg style="left:2px;top:630px" width="16" height="16"><path d="M9.5 4v7l-4-3.5z" fill="#000"/></svg>
<div class="r sbr" style="left:1330px;top:630px;width:16px;height:16px;background:#d6d3ce;"></div>
<svg style="left:1330px;top:630px" width="16" height="16"><path d="M6.5 4v7l4-3.5z" fill="#000"/></svg>
<div class="r sbr" style="left:18px;top:630px;width:1292px;height:16px;background:#d6d3ce;"></div>
<div class="r" style="left:1346px;top:630px;width:16px;height:16px;background:#d6d3ce;"></div>
<div class="r" style="left:0px;top:647px;width:1364px;height:1px;background:#fff;"></div>
<div class="r" style="left:3px;top:649px;width:3px;height:26px;background:#d6d3ce;box-shadow:inset 1px 1px #fff,inset -1px -1px #848284;"></div>
<div class="r" style="left:7px;top:649px;width:3px;height:26px;background:#d6d3ce;box-shadow:inset 1px 1px #fff,inset -1px -1px #848284;"></div>
<div class="r" style="left:153px;top:651px;width:1px;height:22px;background:#848284;"></div>
<div class="r" style="left:154px;top:651px;width:1px;height:22px;background:#fff;"></div>
<div class="r" style="left:184px;top:651px;width:1px;height:22px;background:#848284;"></div>
<div class="r" style="left:185px;top:651px;width:1px;height:22px;background:#fff;"></div>
<div class="r" style="left:215px;top:651px;width:1px;height:22px;background:#848284;"></div>
<div class="r" style="left:216px;top:651px;width:1px;height:22px;background:#fff;"></div>
<div class="r" style="left:292px;top:651px;width:1px;height:22px;background:#848284;"></div>
<div class="r" style="left:293px;top:651px;width:1px;height:22px;background:#fff;"></div>
<div class="r" style="left:369px;top:651px;width:1px;height:22px;background:#848284;"></div>
<div class="r" style="left:370px;top:651px;width:1px;height:22px;background:#fff;"></div>
<div class="r" style="left:425px;top:648px;width:1px;height:29px;background:#848284;"></div>
<div class="r" style="left:426px;top:648px;width:1px;height:29px;background:#fff;"></div>
<div class="r" style="left:0px;top:676px;width:426px;height:1px;background:#848284;"></div>
<div class="r" style="left:0px;top:677px;width:1364px;height:1px;background:#fff;"></div>
<div class="r" style="left:0px;top:678px;width:1364px;height:1px;background:#f0eeea;"></div>
<div class="r" style="left:373px;top:651px;width:23px;height:22px;background:#fff;background:repeating-conic-gradient(#fff 0 25%,#d6d3ce 0 50%) 0 0/2px 2px;box-shadow:inset 1px 1px #848284,inset -1px -1px #fff;"></div>
<div class="r" style="left:396px;top:651px;width:23px;height:22px;background:#fff;background:repeating-conic-gradient(#fff 0 25%,#d6d3ce 0 50%) 0 0/2px 2px;box-shadow:inset 1px 1px #848284,inset -1px -1px #fff;"></div>
<div class="r raised" style="left:2px;top:682px;width:223px;height:20px;background:#d6d3ce;"></div>
<span class="t" style="left:22.00px;top:685.10px;line-height:15px;font-size:11px;font-family:'DejaVu Sans Condensed','DejaVu Sans','Liberation Sans',sans-serif;letter-spacing:-0.009px;">Справочник: Контрагенты (10.09.20...</span>
<div class="r raised" style="left:228px;top:682px;width:223px;height:20px;background:#d6d3ce;"></div>
<span class="t" style="left:247.50px;top:685.10px;line-height:15px;font-size:11px;font-family:'DejaVu Sans Condensed','DejaVu Sans','Liberation Sans',sans-serif;letter-spacing:-0.198px;">Ведомость по контрагентам  *</span>
<div class="r raised" style="left:454px;top:682px;width:223px;height:20px;background:#d6d3ce;"></div>
<span class="t" style="left:473.60px;top:685.10px;line-height:15px;font-size:11px;font-family:'DejaVu Sans Condensed','DejaVu Sans','Liberation Sans',sans-serif;letter-spacing:0.085px;">C:\1C\Bases\MCFO new\ExtForms\gro...</span>
<div class="r raised" style="left:680px;top:682px;width:223px;height:20px;background:#d6d3ce;"></div>
<span class="t" style="left:699.40px;top:685.10px;line-height:15px;font-size:11px;font-family:'DejaVu Sans Condensed','DejaVu Sans','Liberation Sans',sans-serif;letter-spacing:-0.129px;">Bank Statement line (Expenses). Пров...</span>
<div class="r sunken" style="left:906px;top:682px;width:223px;height:20px;background:#e6e4df;"></div>
<span class="t" style="left:926.50px;top:685.10px;line-height:15px;font-size:11px;font-weight:bold;font-family:'DejaVu Sans Condensed','DejaVu Sans','Liberation Sans',sans-serif;letter-spacing:0.086px;">Движения документа Bank Stat...</span>
<div class="r" style="left:0px;top:704px;width:1364px;height:1px;background:#848284;"></div>
<div class="r" style="left:0px;top:705px;width:1364px;height:1px;background:#fff;"></div>
<span class="t" style="left:2.00px;top:709.10px;line-height:15px;font-size:11px;font-family:'DejaVu Sans Condensed','DejaVu Sans','Liberation Sans',sans-serif;letter-spacing:-0.250px;">Для получения подсказки нажмите F1</span>
<div class="r thins" style="left:849px;top:708px;width:26px;height:16px;background:#d6d3ce;"></div>
<div class="r thins" style="left:877px;top:708px;width:28px;height:16px;background:#d6d3ce;"></div>
<div class="r thins" style="left:907px;top:708px;width:151px;height:16px;background:#d6d3ce;"></div>
<div class="r thins" style="left:1060px;top:708px;width:151px;height:16px;background:#d6d3ce;"></div>
<div class="r thins" style="left:1213px;top:708px;width:150px;height:16px;background:#d6d3ce;"></div>
<span class="t" style="left:879.00px;top:709.10px;line-height:15px;font-size:11px;font-family:'DejaVu Sans Condensed','DejaVu Sans','Liberation Sans',sans-serif;letter-spacing:-0.729px;">NUM</span>
<span class="t" style="left:908.80px;top:709.10px;line-height:15px;font-size:11px;font-family:'DejaVu Sans Condensed','DejaVu Sans','Liberation Sans',sans-serif;letter-spacing:-0.069px;">ТА: 31.12.2015  00:00:00</span>
<span class="t" style="left:1061.90px;top:709.10px;line-height:15px;font-size:11px;font-family:'DejaVu Sans Condensed','DejaVu Sans','Liberation Sans',sans-serif;letter-spacing:-0.168px;">БИ: 3 квартал 2015 г.</span>
<span class="t" style="left:1215.30px;top:709.10px;line-height:15px;font-size:11px;font-family:'DejaVu Sans Condensed','DejaVu Sans','Liberation Sans',sans-serif;letter-spacing:-0.158px;">ТП: Январь 2015 г.</span>
<div class="r" style="left:0px;top:726px;width:1364px;height:1px;background:#fff;"></div>
<div class="r raised" style="left:2px;top:728px;width:52px;height:38px;background:#d6d3ce;"></div>
<span class="t" style="left:20.40px;top:739.00px;line-height:16px;font-size:12px;font-weight:bold;font-family:'DejaVu Sans Condensed','DejaVu Sans','Liberation Sans',sans-serif;letter-spacing:-0.504px;">Start</span>
<div class="r" style="left:61px;top:730px;width:3px;height:33px;background:#d6d3ce;box-shadow:inset 1px 1px #fff,inset -1px -1px #848284;"></div>
<div class="r sunken" style="left:72px;top:728px;width:48px;height:38px;background:#d6d3ce;"></div>
<div class="r" style="left:74px;top:730px;width:41px;height:34px;background:#fff;"></div>
<div class="r raised" style="left:272px;top:728px;width:48px;height:38px;background:#d6d3ce;"></div>
<div class="r" style="left:1143px;top:730px;width:2px;height:34px;background:#d6d3ce;box-shadow:inset 1px 0 #fff,inset -1px 0 #848284;"></div>
<span class="t" style="left:1153.50px;top:736.90px;line-height:16px;font-size:12px;font-family:'DejaVu Sans Condensed','DejaVu Sans','Liberation Sans',sans-serif;letter-spacing:-0.353px;">EN</span>
<div class="r" style="left:1173px;top:734px;width:1px;height:22px;background:#848284;"></div>
<div class="r" style="left:1174px;top:734px;width:1px;height:22px;background:#fff;"></div>
<div class="r" style="left:1201px;top:734px;width:1px;height:22px;background:#848284;"></div>
<div class="r" style="left:1202px;top:734px;width:1px;height:22px;background:#fff;"></div>
<div class="r thins" style="left:1204px;top:728px;width:157px;height:37px;background:#d6d3ce;"></div>
<span class="t" style="left:1295.30px;top:731.90px;line-height:15px;font-size:11px;font-family:'DejaVu Sans Condensed','DejaVu Sans','Liberation Sans',sans-serif;letter-spacing:-0.303px;">10:28</span>
<span class="t" style="left:1281.00px;top:747.80px;line-height:15px;font-size:11px;font-family:'DejaVu Sans Condensed','DejaVu Sans','Liberation Sans',sans-serif;letter-spacing:-0.146px;">10.09.2015</span>
<svg style="left:14px;top:46px" width="15" height="15" shape-rendering="crispEdges"><path stroke="#ffff00" d="M1 0.5h1M4 0.5h1M2 1.5h1M4 1.5h1M0 2.5h2M3 2.5h2M2 3.5h3M1 4.5h2M4 4.5h1M0 5.5h1M2 5.5h1M5 5.5h1"/><path stroke="#848200" d="M5 1.5h7M5 2.5h1M11 2.5h1M11 3.5h1M3 4.5h1M11 4.5h1M3 5.5h1M3 6.5h1M3 7.5h1M3 8.5h1M3 9.5h1M3 10.5h1M3 11.5h1M3 12.5h1M3 13.5h1M3 14.5h1"/><path stroke="#ebe9e6" d="M6 2.5h5M5 3.5h6M5 4.5h6M4 5.5h1M6 5.5h8M4 6.5h10M4 7.5h10M4 8.5h10M4 9.5h10M4 10.5h10M4 11.5h10M4 12.5h10M4 13.5h10"/><path stroke="#000" d="M12 2.5h1M13 3.5h1M12 4.5h3M14 5.5h1M14 6.5h1M14 7.5h1M14 8.5h1M14 9.5h1M14 10.5h1M14 11.5h1M14 12.5h1M14 13.5h1M4 14.5h11"/><path stroke="#fff" d="M12 3.5h1"/></svg>
<svg style="left:38px;top:46px" width="16" height="12" shape-rendering="crispEdges"><path stroke="#000" d="M9 0.5h3M8 1.5h1M12 1.5h1M14 1.5h1M13 2.5h2M1 3.5h3M12 3.5h3M0 4.5h1M4 4.5h7M0 5.5h1M10 5.5h1M0 6.5h1M10 6.5h1M0 7.5h1M4 7.5h12M0 8.5h1M3 8.5h1M15 8.5h1M0 9.5h1M2 9.5h1M14 9.5h1M0 10.5h2M13 10.5h1M0 11.5h13"/><path stroke="#ffff9c" d="M1 4.5h3M1 5.5h9M1 6.5h9M1 7.5h3M1 8.5h2M1 9.5h1"/><path stroke="#848200" d="M4 8.5h11M3 9.5h11M2 10.5h11"/></svg>
<svg style="left:61px;top:46px" width="14" height="14" shape-rendering="crispEdges"><path stroke="#000" d="M0 0.5h14M0 1.5h1M13 1.5h1M0 2.5h1M13 2.5h1M0 3.5h1M13 3.5h1M0 4.5h1M13 4.5h1M0 5.5h1M13 5.5h1M0 6.5h1M13 6.5h1M0 7.5h1M13 7.5h1M0 8.5h1M13 8.5h1M0 9.5h1M3 9.5h8M13 9.5h1M0 10.5h1M3 10.5h5M10 10.5h1M13 10.5h1M0 11.5h1M3 11.5h5M10 11.5h1M13 11.5h1M0 12.5h1M3 12.5h5M10 12.5h1M13 12.5h1M1 13.5h13"/><path stroke="#848200" d="M1 1.5h2M10 1.5h2M1 2.5h2M10 2.5h3M1 3.5h2M10 3.5h3M1 4.5h2M10 4.5h3M1 5.5h2M10 5.5h3M1 6.5h2M10 6.5h3M1 7.5h12M1 8.5h12M1 9.5h2M11 9.5h2M1 10.5h2M11 10.5h2M1 11.5h2M11 11.5h2M1 12.5h2M11 12.5h2"/><path stroke="#84ffff" d="M3 1.5h7M3 2.5h7M3 3.5h7M3 4.5h7M3 5.5h7M3 6.5h7"/><path stroke="#ebe9e6" d="M12 1.5h1M8 10.5h2M8 11.5h2M8 12.5h2"/></svg>
<svg style="left:93px;top:46px" width="14" height="16"><g transform="translate(1,1)" stroke="#fff" fill="none" stroke-width="1"><path d="M3.5 0.5L6.5 9M8.5 0.5L5.5 9"/><ellipse cx="3" cy="11.5" rx="1.8" ry="2.3"/><ellipse cx="9" cy="11.5" rx="1.8" ry="2.3"/></g><g transform="translate(0,0)" stroke="#848284" fill="none" stroke-width="1"><path d="M3.5 0.5L6.5 9M8.5 0.5L5.5 9"/><ellipse cx="3" cy="11.5" rx="1.8" ry="2.3"/><ellipse cx="9" cy="11.5" rx="1.8" ry="2.3"/></g></svg>
<svg style="left:115px;top:46px" width="15" height="13" shape-rendering="crispEdges"><path stroke="#000" d="M0 0.5h6M0 1.5h1M5 1.5h2M0 2.5h1M2 2.5h2M5 2.5h1M7 2.5h1M0 3.5h1M5 3.5h1M0 4.5h1M2 4.5h2M5 4.5h1M0 5.5h1M5 5.5h1M0 6.5h1M2 6.5h4M8 6.5h2M0 7.5h1M5 7.5h1M0 8.5h6M8 8.5h5M8 10.5h5"/><path stroke="#fff" d="M1 1.5h4M1 2.5h1M4 2.5h1M6 2.5h1M1 3.5h4M1 4.5h1M4 4.5h1M7 4.5h4M1 5.5h4M7 5.5h4M12 5.5h1M1 6.5h1M7 6.5h1M10 6.5h1M1 7.5h4M7 7.5h7M7 8.5h1M13 8.5h1M7 9.5h7M7 10.5h1M13 10.5h1M7 11.5h7"/><path stroke="#000084" d="M6 3.5h6M6 4.5h1M11 4.5h2M6 5.5h1M11 5.5h1M13 5.5h1M6 6.5h1M11 6.5h4M6 7.5h1M14 7.5h1M6 8.5h1M14 8.5h1M6 9.5h1M14 9.5h1M6 10.5h1M14 10.5h1M6 11.5h1M14 11.5h1M6 12.5h9"/></svg>
<svg style="left:138px;top:46px" width="16" height="15" shape-rendering="crispEdges"><path stroke="#848284" d="M4 0.5h5M1 1.5h12M0 2.5h4M9 2.5h4M0 3.5h13M0 4.5h13M0 5.5h13M0 6.5h6M0 7.5h6M7 7.5h5M0 8.5h6M7 8.5h1M11 8.5h1M13 8.5h1M0 9.5h6M7 9.5h8M0 10.5h6M7 10.5h1M14 10.5h1M0 11.5h6M7 11.5h8M1 12.5h5M7 12.5h1M14 12.5h1M7 13.5h8"/><path stroke="#fff" d="M4 2.5h5M6 6.5h8M6 7.5h1M12 7.5h3M6 8.5h1M8 8.5h3M12 8.5h1M14 8.5h2M6 9.5h1M15 9.5h1M6 10.5h1M8 10.5h6M15 10.5h1M6 11.5h1M15 11.5h1M6 12.5h1M8 12.5h6M15 12.5h1M6 13.5h1M15 13.5h1M6 14.5h10"/></svg>
<svg style="left:168px;top:46px" width="16" height="14" shape-rendering="crispEdges"><path stroke="#000" d="M4 0.5h9M3 1.5h1M11 1.5h1M3 2.5h1M5 2.5h4M10 2.5h2M2 3.5h1M10 3.5h1M12 3.5h2M2 4.5h1M4 4.5h4M10 4.5h1M14 4.5h1M1 5.5h10M14 5.5h2M0 6.5h1M11 6.5h2M14 6.5h2M0 7.5h1M13 7.5h1M15 7.5h1M0 8.5h1M13 8.5h3M0 9.5h14M15 9.5h1M0 10.5h1M13 10.5h2M0 11.5h14M1 12.5h1M12 12.5h1M1 13.5h12"/><path stroke="#fff" d="M4 1.5h7M4 2.5h1M9 2.5h1M3 3.5h7M11 3.5h1M3 4.5h1M8 4.5h2M11 4.5h3M11 5.5h3M1 6.5h10M13 6.5h1M14 7.5h1M14 9.5h1M2 12.5h10"/><path stroke="#c6c3c6" d="M1 7.5h12M1 8.5h6M10 8.5h3M1 10.5h12"/><path stroke="#ffff00" d="M7 8.5h3"/></svg>
<svg style="left:191px;top:46px" width="16" height="14" shape-rendering="crispEdges"><path stroke="#000" d="M4 0.5h7M3 1.5h1M8 1.5h4M3 2.5h1M5 2.5h3M12 2.5h1M2 3.5h1M6 3.5h1M13 3.5h1M2 4.5h1M4 4.5h3M9 4.5h2M13 4.5h1M1 5.5h6M13 5.5h1M0 6.5h1M7 6.5h1M12 6.5h2M0 7.5h1M7 7.5h8M0 8.5h1M12 8.5h4M0 9.5h13M14 9.5h2M0 10.5h1M11 10.5h1M0 11.5h12M1 12.5h1M10 12.5h1M1 13.5h10"/><path stroke="#fff" d="M4 1.5h4M4 2.5h1M8 2.5h4M3 3.5h3M7 3.5h1M9 3.5h4M3 4.5h1M7 4.5h2M11 4.5h2M7 5.5h1M9 5.5h4M1 6.5h6M8 6.5h4M2 12.5h8"/><path stroke="#00ffff" d="M8 3.5h1M8 5.5h1"/><path stroke="#c6c3c6" d="M1 7.5h6M1 8.5h11M1 10.5h10"/></svg>
<svg style="left:222px;top:46px" width="16" height="14" shape-rendering="crispEdges"><path stroke="#000" d="M1 0.5h14M0 1.5h1M15 1.5h1M0 2.5h1M6 2.5h4M15 2.5h1M0 3.5h1M5 3.5h1M10 3.5h1M15 3.5h1M0 4.5h1M5 4.5h1M7 4.5h1M10 4.5h1M15 4.5h1M0 5.5h1M5 5.5h1M10 5.5h1M15 5.5h1M0 6.5h1M6 6.5h1M9 6.5h1M15 6.5h1M0 7.5h1M6 7.5h1M9 7.5h2M15 7.5h1M0 8.5h1M6 8.5h1M9 8.5h1M15 8.5h1M0 9.5h1M6 9.5h1M9 9.5h2M15 9.5h1M0 10.5h1M6 10.5h1M9 10.5h1M15 10.5h1M0 11.5h1M7 11.5h2M15 11.5h1M0 12.5h1M15 12.5h1M1 13.5h14"/><path stroke="#fff" d="M1 1.5h14M1 2.5h1M13 2.5h2M1 3.5h1M13 3.5h2M1 4.5h1M13 4.5h2M1 5.5h1M13 5.5h2M1 6.5h1M13 6.5h2M1 7.5h1M13 7.5h2M1 8.5h1M13 8.5h2M1 9.5h1M13 9.5h2M1 10.5h1M13 10.5h2M1 11.5h1M13 11.5h2M1 12.5h14"/><path stroke="#84ffff" d="M2 2.5h4M10 2.5h3M2 3.5h3M11 3.5h2M2 4.5h3M11 4.5h2M2 5.5h3M11 5.5h2M2 6.5h4M10 6.5h3M2 7.5h4M11 7.5h2M2 8.5h4M10 8.5h3M2 9.5h4M11 9.5h2M2 10.5h4M10 10.5h3M2 11.5h5M9 11.5h4"/><path stroke="#ffff00" d="M6 3.5h4M6 4.5h1M8 4.5h2M6 5.5h4M7 6.5h2M7 7.5h2M7 8.5h2M7 9.5h2M7 10.5h2"/></svg>
<svg style="left:247px;top:47px" width="14" height="13" shape-rendering="crispEdges"><path stroke="#848284" d="M4 0.5h2M3 1.5h3M2 2.5h8M1 3.5h11M0 4.5h12M1 5.5h5M9 5.5h4M2 6.5h4M10 6.5h3M3 7.5h1M10 7.5h3M10 8.5h3M1 9.5h12M1 10.5h11M1 11.5h10"/><path stroke="#fff" d="M6 0.5h1M6 1.5h1M12 4.5h1M6 5.5h3M13 5.5h1M6 6.5h1M13 6.5h1M4 7.5h2M13 7.5h1M13 8.5h1M13 9.5h1M12 10.5h1M11 11.5h1M2 12.5h9"/></svg>
<svg style="left:270px;top:47px" width="14" height="13" shape-rendering="crispEdges"><path stroke="#848284" d="M7 0.5h2M7 1.5h3M4 2.5h8M2 3.5h11M1 4.5h12M0 5.5h4M8 5.5h5M0 6.5h3M8 6.5h4M0 7.5h3M9 7.5h2M0 8.5h3M0 9.5h12M1 10.5h11M2 11.5h10"/><path stroke="#fff" d="M9 0.5h1M10 1.5h1M12 2.5h1M13 3.5h1M13 4.5h1M4 5.5h4M13 5.5h1M3 6.5h1M12 6.5h1M3 7.5h1M11 7.5h1M3 8.5h1M10 8.5h1M12 9.5h1M12 10.5h1M12 11.5h1M3 12.5h10"/></svg>
<svg style="left:292px;top:48px" width="14" height="12" shape-rendering="crispEdges"><path stroke="#000" d="M3 0.5h2M9 0.5h2M2 1.5h1M4 1.5h2M8 1.5h1M10 1.5h2M2 2.5h4M8 2.5h4M1 3.5h5M8 3.5h5M1 4.5h1M3 4.5h6M10 4.5h3M0 5.5h2M3 5.5h3M8 5.5h2M11 5.5h3M0 6.5h1M2 6.5h4M8 6.5h1M10 6.5h4M0 7.5h1M2 7.5h7M10 7.5h4M0 8.5h1M2 8.5h4M8 8.5h1M10 8.5h4M0 9.5h1M2 9.5h4M8 9.5h1M10 9.5h4M0 10.5h6M8 10.5h6M0 11.5h6M8 11.5h6"/><path stroke="#fff" d="M3 1.5h1M9 1.5h1M2 4.5h1M9 4.5h1M2 5.5h1M6 5.5h2M10 5.5h1M1 6.5h1M6 6.5h2M9 6.5h1M1 7.5h1M9 7.5h1M1 8.5h1M9 8.5h1M1 9.5h1M9 9.5h1"/></svg>
<div class="r sunken" style="left:311px;top:43px;width:149px;height:20px;background:#fff;"></div>
<div class="r" style="left:314px;top:46px;width:116px;height:14px;background:#08246b;"></div>
<span class="t" style="left:315.50px;top:45.30px;line-height:15px;font-size:11px;font-family:'DejaVu Sans Condensed','DejaVu Sans','Liberation Sans',sans-serif;color:#fff;letter-spacing:-0.361px;">Unique Atlantic (deposit)</span>
<div class="r raised" style="left:443px;top:45px;width:15px;height:16px;background:#d6d3ce;"></div>
<svg style="left:443px;top:45px" width="15" height="16"><path d="M4 6.5h7l-3.5 4z" fill="#000"/></svg>
<svg style="left:465px;top:52px" width="13" height="9" shape-rendering="crispEdges"><path stroke="#000" d="M2 0.5h3M8 0.5h3M1 1.5h1M3 1.5h3M7 1.5h1M9 1.5h3M1 2.5h5M7 2.5h5M0 3.5h2M3 3.5h5M9 3.5h4M0 4.5h1M2 4.5h3M7 4.5h1M9 4.5h4M0 5.5h1M2 5.5h6M9 5.5h4M0 6.5h1M2 6.5h4M7 6.5h1M9 6.5h4M0 7.5h6M7 7.5h6M0 8.5h6M7 8.5h6"/><path stroke="#fff" d="M2 1.5h1M8 1.5h1M2 3.5h1M8 3.5h1M1 4.5h1M5 4.5h2M8 4.5h1M1 5.5h1M8 5.5h1M1 6.5h1M8 6.5h1"/></svg>
<svg style="left:465px;top:46px" width="14" height="8"><path d="M4.5 6.5c-2-3 1-5.500 4-5 2 .3 3 2 3 3" stroke="#000084" stroke-width="1.3" fill="none"/><path d="M8.500 3.500h5v-3.500z" fill="#000084" transform="translate(0,1.500)"/></svg>
<svg style="left:489px;top:52px" width="13" height="9" shape-rendering="crispEdges"><path stroke="#000" d="M2 0.5h3M8 0.5h3M1 1.5h1M3 1.5h3M7 1.5h1M9 1.5h3M1 2.5h5M7 2.5h5M0 3.5h2M3 3.5h5M9 3.5h4M0 4.5h1M2 4.5h3M7 4.5h1M9 4.5h4M0 5.5h1M2 5.5h6M9 5.5h4M0 6.5h1M2 6.5h4M7 6.5h1M9 6.5h4M0 7.5h6M7 7.5h6M0 8.5h6M7 8.5h6"/><path stroke="#fff" d="M2 1.5h1M8 1.5h1M2 3.5h1M8 3.5h1M1 4.5h1M5 4.5h2M8 4.5h1M1 5.5h1M8 5.5h1M1 6.5h1M8 6.5h1"/></svg>
<svg style="left:489px;top:46px" width="14" height="8"><path d="M9.500 6.500c2-3-1-5.500-4-5-2 .3-3 2-3 3" stroke="#000084" stroke-width="1.300" fill="none"/><path d="M5.500 3.500h-5v-3.500z" fill="#000084" transform="translate(0,1.500)"/></svg>
<svg style="left:522px;top:47px" width="10" height="13" shape-rendering="crispEdges"><path stroke="#000" d="M2 0.5h6M1 1.5h1M8 1.5h1M0 2.5h1M3 2.5h4M9 2.5h1M0 3.5h1M2 3.5h1M6 3.5h1M9 3.5h1M1 4.5h1M5 4.5h1M8 4.5h1M4 5.5h1M7 5.5h1M3 6.5h1M6 6.5h1M3 7.5h1M5 7.5h1M4 8.5h1M3 9.5h3M3 10.5h1M6 10.5h1M3 11.5h1M6 11.5h1M4 12.5h2"/><path stroke="#ffff00" d="M2 1.5h6M1 2.5h2M7 2.5h2M1 3.5h1M7 3.5h2M6 4.5h2M5 5.5h2M4 6.5h2M4 7.5h1M4 10.5h2M4 11.5h2"/></svg>
<svg style="left:560px;top:47px" width="16" height="12" shape-rendering="crispEdges"><path stroke="#fff" d="M0 0.5h16M0 1.5h1M0 2.5h1M0 3.5h1M0 4.5h1M0 5.5h1M0 6.5h1M0 7.5h1M0 8.5h1M0 9.5h1M0 10.5h1M0 11.5h1"/><path stroke="#ebe9e6" d="M1 1.5h14M1 2.5h1M13 2.5h1M1 3.5h1M13 3.5h1M1 4.5h14M1 5.5h1M3 5.5h1M5 5.5h1M7 5.5h1M9 5.5h1M13 5.5h2M1 6.5h14M1 7.5h1M3 7.5h1M5 7.5h1M7 7.5h1M9 7.5h1M13 7.5h2M1 8.5h14M1 9.5h1M3 9.5h1M5 9.5h1M7 9.5h1M9 9.5h1M11 9.5h1M13 9.5h2M1 10.5h14"/><path stroke="#000" d="M15 1.5h1M15 2.5h1M2 3.5h11M15 3.5h1M15 4.5h1M2 5.5h1M4 5.5h1M6 5.5h1M8 5.5h1M15 5.5h1M15 6.5h1M2 7.5h1M4 7.5h1M6 7.5h1M8 7.5h1M15 7.5h1M15 8.5h1M2 9.5h1M4 9.5h1M6 9.5h1M8 9.5h1M10 9.5h1M12 9.5h1M15 9.5h1M15 10.5h1M1 11.5h15"/><path stroke="#00ffff" d="M2 2.5h11"/><path stroke="#848284" d="M14 2.5h1M14 3.5h1"/><path stroke="#840000" d="M10 5.5h3M10 7.5h3"/></svg>
<svg style="left:583px;top:46px" width="16" height="14" shape-rendering="crispEdges"><path stroke="#fff" d="M0 0.5h16M0 1.5h1M0 2.5h1M0 3.5h1M0 4.5h1M0 5.5h1M0 6.5h1M0 7.5h1M0 8.5h1M0 9.5h1M0 10.5h1M0 11.5h1M0 12.5h1M0 13.5h1"/><path stroke="#ebe9e6" d="M1 1.5h1M4 1.5h1M6 1.5h1M9 1.5h1M11 1.5h1M14 1.5h1M1 2.5h1M14 2.5h1M1 3.5h14M1 4.5h1M3 4.5h1M5 4.5h1M7 4.5h1M9 4.5h1M11 4.5h1M14 4.5h1M1 5.5h14M1 6.5h1M3 6.5h1M5 6.5h1M7 6.5h1M9 6.5h1M11 6.5h1M14 6.5h1M1 7.5h14M1 8.5h1M3 8.5h1M5 8.5h1M7 8.5h1M9 8.5h1M11 8.5h1M14 8.5h1M1 9.5h14M1 10.5h1M3 10.5h1M5 10.5h1M7 10.5h1M9 10.5h1M11 10.5h1M14 10.5h1M1 11.5h14M1 12.5h1M3 12.5h1M5 12.5h1M7 12.5h1M9 12.5h1M11 12.5h4"/><path stroke="#000" d="M2 1.5h2M5 1.5h1M7 1.5h2M10 1.5h1M12 1.5h2M15 1.5h1M15 2.5h1M15 3.5h1M2 4.5h1M4 4.5h1M6 4.5h1M8 4.5h1M10 4.5h1M15 4.5h1M15 5.5h1M2 6.5h1M4 6.5h1M6 6.5h1M8 6.5h1M10 6.5h1M15 6.5h1M15 7.5h1M2 8.5h1M4 8.5h1M6 8.5h1M8 8.5h1M10 8.5h1M15 8.5h1M15 9.5h1M2 10.5h1M4 10.5h1M6 10.5h1M8 10.5h1M10 10.5h1M15 10.5h1M15 11.5h1M2 12.5h1M4 12.5h1M6 12.5h1M8 12.5h1M10 12.5h1M15 12.5h1M1 13.5h15"/><path stroke="#848284" d="M2 2.5h12"/><path stroke="#ff0000" d="M12 4.5h2M12 6.5h2M12 8.5h2M12 10.5h2"/></svg>
<svg style="left:606px;top:46px" width="16" height="14" shape-rendering="crispEdges"><path stroke="#000" d="M6 0.5h10M0 1.5h7M15 1.5h1M0 2.5h1M5 2.5h1M11 2.5h3M15 2.5h1M0 3.5h1M4 3.5h1M10 3.5h1M13 3.5h1M15 3.5h1M0 4.5h1M4 4.5h1M9 4.5h2M13 4.5h1M15 4.5h1M0 5.5h1M4 5.5h1M8 5.5h6M15 5.5h1M0 6.5h6M8 6.5h8M4 7.5h1M6 7.5h5M3 8.5h1M6 8.5h1M2 9.5h1M5 9.5h1M1 10.5h1M4 10.5h1M0 11.5h1M3 11.5h1M0 12.5h1M2 12.5h1M1 13.5h1"/><path stroke="#fff" d="M7 1.5h2M11 1.5h4M1 2.5h4M6 2.5h2M9 2.5h2M14 2.5h1M1 3.5h1M3 3.5h1M5 3.5h2M8 3.5h2M11 3.5h2M14 3.5h1M2 4.5h1M5 4.5h1M7 4.5h2M11 4.5h2M14 4.5h1M1 5.5h3M5 5.5h3M14 5.5h1M6 6.5h2"/><path stroke="#ff0000" d="M9 1.5h2M8 2.5h1M2 3.5h1M7 3.5h1M1 4.5h1M3 4.5h1M6 4.5h1"/><path stroke="#0000ff" d="M5 7.5h1M4 8.5h2M3 9.5h2M2 10.5h2M1 11.5h2M1 12.5h1"/></svg>
<svg style="left:637px;top:46px" width="16" height="15" shape-rendering="crispEdges"><path stroke="#840084" d="M2 0.5h2M1 1.5h1M4 1.5h1M1 2.5h1M5 2.5h1M1 3.5h1M6 3.5h1M1 4.5h1M6 4.5h1M1 5.5h1M6 5.5h1M1 6.5h1M6 6.5h1M1 7.5h1M6 7.5h1M1 8.5h1M6 8.5h1M1 9.5h1M6 9.5h1M1 10.5h2M6 10.5h1M2 11.5h2M6 11.5h1M13 11.5h3M3 12.5h5M10 12.5h6M4 13.5h10M5 14.5h4"/><path stroke="#000" d="M9 0.5h2M8 1.5h1M11 1.5h2M7 2.5h1M13 2.5h2M7 3.5h1M15 3.5h1M7 4.5h1M10 4.5h1M15 4.5h1M7 5.5h1M15 5.5h1M7 6.5h1M10 6.5h1M15 6.5h1M7 7.5h1M15 7.5h1M7 8.5h1M10 8.5h1M15 8.5h1M7 9.5h1M15 9.5h1M7 10.5h1M13 10.5h3M7 11.5h1M10 11.5h3M8 12.5h2"/><path stroke="#fff" d="M2 1.5h2M2 2.5h3M2 3.5h4M2 4.5h4M2 5.5h4M2 6.5h4M2 7.5h4M2 8.5h4M2 9.5h4M3 10.5h3M4 11.5h2"/><path stroke="#ffff9c" d="M9 1.5h2M8 2.5h5M8 3.5h7M8 4.5h2M11 4.5h4M8 5.5h7M8 6.5h2M11 6.5h4M8 7.5h7M8 8.5h2M11 8.5h4M8 9.5h7M8 10.5h5M8 11.5h2"/></svg>
<span class="t" style="left:670.50px;top:45.00px;line-height:16px;font-size:12px;font-weight:bold;font-family:'Liberation Serif',serif;">M</span>
<span class="t" style="left:690.70px;top:45.00px;line-height:16px;font-size:12px;font-weight:bold;font-family:'Liberation Serif',serif;letter-spacing:-0.836px;">M+</span>
<span class="t" style="left:713.50px;top:45.00px;line-height:16px;font-size:12px;font-weight:bold;font-family:'Liberation Serif',serif;letter-spacing:-0.836px;">M−</span>
<svg style="left:16px;top:77px" width="12" height="13" shape-rendering="crispEdges"><path stroke="#ffff00" d="M0 0.5h9M2 1.5h5M3 2.5h2M4 5.5h1M3 6.5h2M4 7.5h1"/><path stroke="#848200" d="M0 1.5h2M7 1.5h2M2 2.5h1M3 7.5h1"/><path stroke="#000" d="M9 1.5h1M5 2.5h4M1 3.5h1M1 4.5h1M11 4.5h1M2 5.5h2M8 5.5h4M7 6.5h1M8 7.5h1M4 8.5h1M8 8.5h1M8 9.5h1M8 10.5h1M8 11.5h1M6 12.5h3"/><path stroke="#00ffff" d="M2 3.5h9M2 4.5h9M5 5.5h3M5 6.5h2M5 7.5h2M5 8.5h2M5 9.5h2M5 10.5h2"/><path stroke="#000084" d="M7 7.5h1M7 8.5h1M7 9.5h1M7 10.5h1M7 11.5h1"/><path stroke="#0000ff" d="M5 11.5h2"/></svg>
<svg style="left:45px;top:76px" width="16" height="15" shape-rendering="crispEdges"><path stroke="#ffff00" d="M5 0.5h6M3 1.5h2M8 1.5h5M2 2.5h2M6 2.5h7M1 3.5h2M4 3.5h10M14 5.5h1M1 6.5h1M7 6.5h1M13 6.5h2M1 7.5h2M6 7.5h3M12 7.5h3M1 8.5h13M1 9.5h13M2 10.5h3M9 10.5h4M2 11.5h4M8 11.5h4M3 12.5h8M5 13.5h4"/><path stroke="#fff" d="M5 1.5h3M4 2.5h2M3 3.5h1M4 5.5h1M10 5.5h1"/><path stroke="#840000" d="M13 2.5h1M14 3.5h1M14 4.5h1"/><path stroke="#000" d="M14 2.5h1M15 3.5h1M0 4.5h14M15 4.5h1M1 5.5h3M5 5.5h5M11 5.5h3M15 5.5h1M2 6.5h5M8 6.5h5M15 6.5h1M3 7.5h3M9 7.5h3M15 7.5h1M14 8.5h1M14 9.5h1M13 10.5h1M12 11.5h2M11 12.5h2M4 13.5h1M9 13.5h3M6 14.5h4"/><path stroke="#ff0000" d="M5 10.5h4M6 11.5h2"/></svg>
<svg style="left:68px;top:76px" width="16" height="15" shape-rendering="crispEdges"><path stroke="#fff" d="M2 0.5h1M6 0.5h1M10 0.5h1M2 1.5h1M7 1.5h1M11 1.5h1"/><path stroke="#000" d="M3 1.5h1M4 2.5h1M8 2.5h1M12 2.5h1M4 3.5h1M8 3.5h1M12 3.5h1M4 4.5h1M8 4.5h1M12 4.5h1M4 5.5h1M8 5.5h1M12 5.5h1M4 6.5h1M8 6.5h1M12 6.5h1M4 7.5h1M8 7.5h1M12 7.5h1M4 8.5h1M8 8.5h1M12 8.5h1M4 9.5h1M8 9.5h1M12 9.5h1M4 10.5h1M8 10.5h1M12 10.5h1M4 11.5h1M8 11.5h1M12 11.5h1M2 12.5h2M8 12.5h1M12 12.5h1M8 13.5h1M10 13.5h2M6 14.5h2"/><path stroke="#ffff00" d="M6 1.5h1M10 1.5h1M6 2.5h2"/><path stroke="#ff0000" d="M1 2.5h3M1 3.5h3M1 4.5h3M1 5.5h3M1 6.5h3M1 7.5h3M1 8.5h3M1 9.5h3M1 10.5h3M2 11.5h2"/><path stroke="#0000ff" d="M10 2.5h2M9 3.5h3M9 4.5h3M9 5.5h3M9 6.5h3M9 7.5h3M9 8.5h3M9 9.5h3M9 10.5h3M9 11.5h3M10 12.5h2"/><path stroke="#008200" d="M5 3.5h2M5 4.5h1M5 5.5h1M5 6.5h1M5 7.5h1M5 8.5h1M5 9.5h1M5 10.5h1M5 11.5h1M5 12.5h1M5 13.5h1"/><path stroke="#00ff00" d="M7 3.5h1M6 4.5h2M6 5.5h2M6 6.5h2M6 7.5h2M6 8.5h2M6 9.5h2M6 10.5h2M6 11.5h2M6 12.5h2M6 13.5h2"/><path stroke="#848284" d="M13 9.5h1M13 10.5h2M14 11.5h1"/><path stroke="#840000" d="M1 11.5h1"/><path stroke="#000084" d="M9 12.5h1"/></svg>
<svg style="left:91px;top:76px" width="16" height="15" shape-rendering="crispEdges"><path stroke="#008200" d="M0 0.5h1M1 1.5h1M2 2.5h1M4 3.5h1M5 4.5h1"/><path stroke="#00ff00" d="M1 0.5h2M2 1.5h3M3 2.5h3M5 3.5h1"/><path stroke="#840000" d="M7 1.5h1M6 2.5h1M12 11.5h1M10 12.5h2M3 13.5h2M8 13.5h2"/><path stroke="#ff0000" d="M7 2.5h4M2 3.5h2M7 3.5h1M9 3.5h4M1 4.5h2M7 4.5h2M10 4.5h1M12 4.5h2M0 5.5h2M6 5.5h2M9 5.5h5M0 6.5h2M7 6.5h2M10 6.5h1M12 6.5h2M0 7.5h1M7 7.5h1M9 7.5h5M0 8.5h2M6 8.5h3M10 8.5h1M12 8.5h2M0 9.5h2M5 9.5h2M8 9.5h6M1 10.5h2M4 10.5h1M6 10.5h3M10 10.5h3M1 11.5h6M8 11.5h4M2 12.5h8M5 13.5h3"/><path stroke="#000" d="M6 3.5h1M6 4.5h1"/><path stroke="#ff8284" d="M8 3.5h1M3 4.5h1M9 4.5h1M11 4.5h1M8 5.5h1M9 6.5h1M11 6.5h1M1 7.5h1M8 7.5h1M9 8.5h1M11 8.5h1M2 9.5h1M7 9.5h1M5 10.5h1M9 10.5h1M7 11.5h1"/><path stroke="#ffff00" d="M4 4.5h1M2 5.5h4M2 6.5h5M2 7.5h5M2 8.5h4M3 9.5h2M3 10.5h1"/><path stroke="#848284" d="M14 5.5h1M14 6.5h1M14 7.5h2M14 8.5h2M14 9.5h2M13 10.5h3M13 11.5h2M12 12.5h2M10 13.5h3M5 14.5h5"/></svg>
<svg style="left:114px;top:76px" width="16" height="15" shape-rendering="crispEdges"><path stroke="#ffff00" d="M5 0.5h3M7 1.5h2M6 2.5h2M5 3.5h1M4 4.5h1M5 5.5h1M3 6.5h1M4 7.5h1M2 8.5h1M3 9.5h1M1 10.5h1M2 11.5h1M1 12.5h1"/><path stroke="#000" d="M8 0.5h1M4 1.5h1M6 1.5h1M9 1.5h2M5 2.5h1M8 2.5h2M4 3.5h1M8 3.5h1M3 4.5h1M9 4.5h1M3 5.5h1M10 5.5h1M2 6.5h1M11 6.5h1M2 7.5h1M11 7.5h1M1 8.5h1M12 8.5h1M1 9.5h1M13 9.5h1M0 10.5h1M13 10.5h1M0 11.5h1M14 11.5h1M0 12.5h1M14 12.5h1M1 13.5h13"/><path stroke="#848200" d="M6 3.5h1M6 4.5h1M8 4.5h1M7 5.5h1M9 5.5h1M5 6.5h1M8 6.5h1M10 6.5h1M9 7.5h1M4 8.5h1M8 8.5h1M10 8.5h1M7 9.5h1M9 9.5h1M11 9.5h2M3 10.5h1M5 10.5h1M9 10.5h1M11 10.5h1M4 11.5h1M8 11.5h1M10 11.5h1M12 11.5h2M3 12.5h1M5 12.5h1M8 12.5h1M10 12.5h1M12 12.5h1"/><path stroke="#c6c300" d="M7 3.5h1M5 4.5h1M7 4.5h1M4 5.5h1M6 5.5h1M8 5.5h1M4 6.5h1M7 6.5h1M9 6.5h1M3 7.5h1M8 7.5h1M10 7.5h1M3 8.5h1M5 8.5h1M9 8.5h1M11 8.5h1M2 9.5h1M4 9.5h1M8 9.5h1M10 9.5h1M2 10.5h1M4 10.5h1M8 10.5h1M10 10.5h1M12 10.5h1M1 11.5h1M3 11.5h1M9 11.5h1M11 11.5h1M2 12.5h1M4 12.5h1M7 12.5h1M9 12.5h1M11 12.5h1M13 12.5h1"/><path stroke="#008200" d="M6 6.5h1M5 7.5h1M7 7.5h1M7 8.5h1M5 9.5h1M6 10.5h1M5 11.5h1M7 11.5h1"/><path stroke="#00ff00" d="M6 7.5h1M6 8.5h1M6 9.5h1M7 10.5h1M6 11.5h1M6 12.5h1"/><path stroke="#848284" d="M15 12.5h1M14 13.5h2M2 14.5h13"/></svg>
<span class="t" style="left:136.88px;top:72.00px;line-height:17px;font-size:13px;font-weight:bold;font-family:'Liberation Sans',sans-serif;color:#008200;">$</span>
<span class="t" style="left:145.88px;top:72.00px;line-height:17px;font-size:13px;font-weight:bold;font-family:'Liberation Sans',sans-serif;color:#ff0000;">£</span>
<span class="t" style="left:139.95px;top:83.35px;line-height:10.5px;font-size:6.5px;font-weight:bold;font-family:'Liberation Sans',sans-serif;color:#0000ff;transform:scaleX(1.55);">DM</span>
<svg style="left:169px;top:76px" width="16" height="15" shape-rendering="crispEdges"><path stroke="#000" d="M4 0.5h1M3 1.5h2M12 1.5h2M0 2.5h4M5 2.5h1M10 2.5h2M13 2.5h1M0 3.5h1M3 3.5h1M5 3.5h3M9 3.5h1M13 3.5h1M0 4.5h1M3 4.5h1M6 4.5h3M13 4.5h1M0 5.5h1M3 5.5h1M6 5.5h1M8 5.5h1M13 5.5h1M0 6.5h1M3 6.5h1M6 6.5h1M8 6.5h1M13 6.5h1M0 7.5h1M3 7.5h1M6 7.5h1M8 7.5h1M13 7.5h1M0 8.5h1M3 8.5h1M6 8.5h1M8 8.5h1M13 8.5h1M0 9.5h1M3 9.5h1M6 9.5h1M8 9.5h1M13 9.5h1M0 10.5h1M3 10.5h1M6 10.5h1M8 10.5h1M13 10.5h1M0 11.5h1M3 11.5h1M6 11.5h1M8 11.5h1M13 11.5h1M0 12.5h1M3 12.5h1M6 12.5h1M8 12.5h1M12 12.5h1M0 13.5h1M3 13.5h1M6 13.5h1M8 13.5h1M10 13.5h2M0 14.5h10"/><path stroke="#000084" d="M12 2.5h1M10 3.5h3M9 4.5h4M9 5.5h2M12 5.5h1M9 6.5h2M12 6.5h1M9 7.5h2M12 7.5h1M9 8.5h2M12 8.5h1M9 9.5h2M12 9.5h1M9 10.5h2M12 10.5h1M9 11.5h2M12 11.5h1M9 12.5h2M9 13.5h1"/><path stroke="#848200" d="M1 3.5h2M1 4.5h2M1 5.5h2M1 6.5h2M1 7.5h2M1 8.5h2M1 9.5h2M1 10.5h2M1 11.5h2M1 12.5h2M1 13.5h2"/><path stroke="#fff" d="M4 4.5h2M4 5.5h2M4 6.5h2M4 7.5h2M4 8.5h2M4 9.5h2M4 10.5h2M4 11.5h2M4 12.5h2M4 13.5h2"/><path stroke="#ffff00" d="M7 5.5h1M7 6.5h1M7 7.5h1M7 8.5h1M7 9.5h1M7 10.5h1M7 11.5h1M7 12.5h1M7 13.5h1"/><path stroke="#0000ff" d="M11 5.5h1M11 6.5h1M11 7.5h1M11 8.5h1M11 9.5h1M11 10.5h1M11 11.5h1M11 12.5h1"/></svg>
<span class="t" style="left:199.00px;top:73.05px;line-height:10.5px;font-size:6.5px;font-weight:bold;font-family:'Liberation Sans',sans-serif;letter-spacing:-0.445px;-webkit-text-stroke:.35px #000;">БАНК</span>
<svg style="left:199px;top:80px" width="16" height="11" shape-rendering="crispEdges"><path stroke="#0000ff" d="M0 0.5h4M0 1.5h4M0 2.5h4M0 3.5h4M0 4.5h4M0 5.5h4M0 6.5h4M0 7.5h4M1 8.5h3M2 9.5h2M3 10.5h1"/><path stroke="#000" d="M5 2.5h8M5 3.5h1M8 3.5h1M12 3.5h1M4 4.5h11M4 5.5h1M9 5.5h1M15 5.5h1M4 6.5h11M5 7.5h1M12 7.5h1M5 8.5h8M4 9.5h1M12 9.5h1M4 10.5h9"/><path stroke="#fff" d="M6 3.5h2M9 3.5h3M5 5.5h4M10 5.5h5M6 7.5h6M5 9.5h7"/></svg>
<span class="t" style="left:222.00px;top:73.05px;line-height:10.5px;font-size:6.5px;font-weight:bold;font-family:'Liberation Sans',sans-serif;letter-spacing:-0.395px;-webkit-text-stroke:.35px #000;">ПЛАТ</span>
<svg style="left:222px;top:81px" width="16" height="10" shape-rendering="crispEdges"><path stroke="#000" d="M0 1.5h15M8 2.5h1M11 2.5h1M14 2.5h1M0 3.5h7M8 3.5h7M8 4.5h1M11 4.5h1M14 4.5h1M0 5.5h15M8 6.5h1M11 6.5h1M14 6.5h1M0 7.5h6M8 7.5h7M10 8.5h2M14 8.5h1M0 9.5h6M8 9.5h7"/><path stroke="#fff" d="M9 2.5h2M12 2.5h2M9 4.5h2M12 4.5h2M9 6.5h2M12 6.5h2M12 8.5h2"/></svg>
<span class="t" style="left:245.00px;top:73.05px;line-height:10.5px;font-size:6.5px;font-weight:bold;font-family:'Liberation Sans',sans-serif;letter-spacing:-1.284px;-webkit-text-stroke:.35px #000;">КАССА</span>
<svg style="left:245px;top:80px" width="16" height="11" shape-rendering="crispEdges"><path stroke="#0000ff" d="M0 0.5h4M0 1.5h4M0 2.5h4M0 3.5h4M0 4.5h4M0 5.5h4M0 6.5h4M0 7.5h4M1 8.5h3M2 9.5h2M3 10.5h1"/><path stroke="#000" d="M5 2.5h8M5 3.5h1M8 3.5h1M12 3.5h1M4 4.5h11M4 5.5h1M9 5.5h1M15 5.5h1M4 6.5h11M5 7.5h1M12 7.5h1M5 8.5h8M4 9.5h1M12 9.5h1M4 10.5h9"/><path stroke="#fff" d="M6 3.5h2M9 3.5h3M5 5.5h4M10 5.5h5M6 7.5h6M5 9.5h7"/></svg>
<svg style="left:276px;top:76px" width="16" height="15" shape-rendering="crispEdges"><path stroke="#000" d="M5 0.5h6M10 1.5h2M10 2.5h1M12 2.5h1M10 3.5h4M13 4.5h1M13 5.5h1M13 6.5h1M13 7.5h1M13 8.5h1M13 9.5h1M13 10.5h1M13 11.5h1M13 12.5h1M5 13.5h9"/><path stroke="#fff" d="M5 1.5h5M5 2.5h5M11 2.5h1M5 3.5h5M5 4.5h8M5 5.5h8M5 6.5h8M5 7.5h8M5 8.5h8M5 9.5h8M5 10.5h8M5 11.5h8M5 12.5h8"/><path stroke="#848284" d="M14 4.5h1M14 5.5h1M14 6.5h1M14 7.5h1M14 8.5h1M14 9.5h1M14 10.5h1M14 11.5h1M14 12.5h1M14 13.5h1M6 14.5h9"/></svg>
<svg style="left:276px;top:78px" width="12" height="10"><path d="M0 3h6v-3l5 5-5 5v-3h-6z" fill="#00a000"/><path d="M0 6h6v3" stroke="#006000" fill="none"/></svg>
<svg style="left:299px;top:76px" width="16" height="15" shape-rendering="crispEdges"><path stroke="#000" d="M5 0.5h6M10 1.5h2M10 2.5h1M12 2.5h1M10 3.5h4M13 4.5h1M13 5.5h1M13 6.5h1M13 7.5h1M13 8.5h1M13 9.5h1M13 10.5h1M13 11.5h1M13 12.5h1M5 13.5h9"/><path stroke="#fff" d="M5 1.5h5M5 2.5h5M11 2.5h1M5 3.5h5M5 4.5h8M5 5.5h8M5 6.5h8M5 7.5h8M5 8.5h8M5 9.5h8M5 10.5h8M5 11.5h8M5 12.5h8"/><path stroke="#848284" d="M14 4.5h1M14 5.5h1M14 6.5h1M14 7.5h1M14 8.5h1M14 9.5h1M14 10.5h1M14 11.5h1M14 12.5h1M14 13.5h1M6 14.5h9"/></svg>
<svg style="left:299px;top:79px" width="12" height="10"><path d="M11 3h-6v-3l-5 5 5 5v-3h6z" fill="#c00000"/><path d="M11 6.500h-6v3" stroke="#700000" fill="none"/></svg>
<svg style="left:333px;top:76px" width="13" height="15" shape-rendering="crispEdges"><path stroke="#fff" d="M6 0.5h4M5 1.5h1M4 2.5h1M3 3.5h1M2 4.5h1M1 5.5h1M0 6.5h1M4 8.5h1M3 9.5h1M2 10.5h1M1 11.5h1M1 12.5h1M0 13.5h1"/><path stroke="#000" d="M10 0.5h2M9 1.5h2M8 2.5h2M7 3.5h2M6 4.5h2M5 5.5h2M5 6.5h5M0 7.5h4M8 7.5h2M7 8.5h2M6 9.5h2M5 10.5h2M4 11.5h2M3 12.5h2M1 13.5h2M0 14.5h1"/><path stroke="#ffff00" d="M6 1.5h3M5 2.5h3M4 3.5h3M3 4.5h3M2 5.5h3M1 6.5h4M4 7.5h4M5 8.5h2M4 9.5h2M3 10.5h2M2 11.5h2M2 12.5h1"/></svg>
<svg style="left:361px;top:76px" width="16" height="14" shape-rendering="crispEdges"><path stroke="#000" d="M5 0.5h8M4 1.5h1M11 1.5h1M13 1.5h1M3 2.5h2M11 2.5h1M14 2.5h1M3 3.5h1M10 3.5h3M14 3.5h1M3 4.5h1M12 4.5h1M14 4.5h1M3 5.5h1M12 5.5h1M14 5.5h1M3 6.5h1M7 6.5h1M10 6.5h1M12 6.5h1M14 6.5h1M3 7.5h1M6 7.5h1M8 7.5h2M11 7.5h2M14 7.5h1M3 8.5h1M5 8.5h1M8 8.5h1M12 8.5h3M3 9.5h2M7 9.5h1M9 9.5h1M12 9.5h2M2 10.5h2M7 10.5h1M10 10.5h1M1 11.5h1M4 11.5h1M6 11.5h1M9 11.5h1M0 12.5h1M4 12.5h2M9 12.5h1M1 13.5h3M6 13.5h3"/><path stroke="#fff" d="M5 1.5h6M12 1.5h1M5 2.5h1M9 2.5h2M12 2.5h2M4 3.5h6M13 3.5h1M4 4.5h1M8 4.5h4M13 4.5h1M4 5.5h8M13 5.5h1M4 6.5h1M8 6.5h2M11 6.5h1M13 6.5h1M4 7.5h2M13 7.5h1M4 8.5h1"/><path stroke="#848284" d="M6 2.5h3M5 4.5h3M5 6.5h2"/><path stroke="#00ffff" d="M2 11.5h2M7 11.5h2M1 12.5h3M6 12.5h3"/></svg>
<svg style="left:393px;top:76px" width="16" height="15" shape-rendering="crispEdges"><path stroke="#000" d="M0 0.5h11M0 1.5h1M12 1.5h1M0 2.5h1M12 2.5h2M0 3.5h1M14 3.5h1M0 4.5h1M14 4.5h1M0 5.5h1M14 5.5h1M0 6.5h1M14 6.5h1M0 7.5h1M14 7.5h1M0 8.5h1M14 8.5h1M0 9.5h1M14 9.5h1M0 10.5h1M14 10.5h1M0 11.5h1M14 11.5h1M0 12.5h1M14 12.5h1M0 13.5h1M14 13.5h1M0 14.5h15"/><path stroke="#848200" d="M11 0.5h1M11 1.5h1M11 2.5h1"/><path stroke="#c6c3c6" d="M12 0.5h2M13 1.5h1M14 2.5h1"/><path stroke="#fff" d="M1 1.5h10M1 2.5h10M1 3.5h13M1 4.5h13M1 5.5h13M1 6.5h13M1 7.5h13M1 8.5h13M1 9.5h13M1 10.5h13M1 11.5h13M1 12.5h13M1 13.5h12"/><path stroke="#848284" d="M13 13.5h1"/></svg>
<span class="t" style="left:394.63px;top:74.50px;line-height:15px;font-size:11px;font-weight:bold;font-family:'Liberation Sans',sans-serif;color:#000084;">T</span>
<svg style="left:400px;top:81px" width="7" height="10" shape-rendering="crispEdges"><path stroke="#000" d="M0 0.5h1M0 1.5h1M0 3.5h1M0 4.5h1M0 6.5h1M0 7.5h1M0 9.5h1"/><path stroke="#008284" d="M1 0.5h6M1 1.5h6M1 3.5h6M1 4.5h6M1 6.5h6M1 7.5h6M1 9.5h6"/><path stroke="#fff" d="M1 2.5h5M1 5.5h5M1 8.5h5"/></svg>
<svg style="left:416px;top:76px" width="16" height="15" shape-rendering="crispEdges"><path stroke="#000" d="M0 0.5h11M0 1.5h1M12 1.5h1M0 2.5h1M12 2.5h2M0 3.5h1M14 3.5h1M0 4.5h1M14 4.5h1M0 5.5h1M14 5.5h1M0 6.5h1M14 6.5h1M0 7.5h1M14 7.5h1M0 8.5h1M14 8.5h1M0 9.5h1M14 9.5h1M0 10.5h1M14 10.5h1M0 11.5h1M14 11.5h1M0 12.5h1M14 12.5h1M0 13.5h1M14 13.5h1M0 14.5h15"/><path stroke="#848200" d="M11 0.5h1M11 1.5h1M11 2.5h1"/><path stroke="#c6c3c6" d="M12 0.5h2M13 1.5h1M14 2.5h1"/><path stroke="#fff" d="M1 1.5h10M1 2.5h10M1 3.5h13M1 4.5h13M1 5.5h13M1 6.5h13M1 7.5h13M1 8.5h13M1 9.5h13M1 10.5h13M1 11.5h13M1 12.5h13M1 13.5h12"/><path stroke="#848284" d="M13 13.5h1"/></svg>
<svg style="left:417px;top:77px" width="13" height="12" shape-rendering="crispEdges"><path stroke="#fff" d="M0 0.5h7M8 0.5h2M11 0.5h2M0 1.5h2M4 1.5h3M8 1.5h2M11 1.5h2M0 3.5h7M8 3.5h5M0 4.5h1M6 4.5h1M8 4.5h1M10 4.5h1M12 4.5h1M0 5.5h1M6 5.5h1M8 5.5h5M0 6.5h7M8 6.5h1M10 6.5h1M12 6.5h1M0 7.5h1M6 7.5h1M8 7.5h5M0 8.5h1M6 8.5h1M8 8.5h1M10 8.5h1M12 8.5h1M0 9.5h7M8 9.5h5M0 10.5h1M6 10.5h1M8 10.5h1M10 10.5h1M12 10.5h1M0 11.5h1M6 11.5h1M8 11.5h5"/><path stroke="#000" d="M7 0.5h1M2 1.5h2M7 1.5h1M0 2.5h13M7 3.5h1M1 4.5h1M7 4.5h1M9 4.5h1M11 4.5h1M1 5.5h1M7 5.5h1M7 6.5h1M9 6.5h1M11 6.5h1M1 7.5h1M7 7.5h1M1 8.5h1M7 8.5h1M9 8.5h1M11 8.5h1M7 9.5h1M1 10.5h1M7 10.5h1M9 10.5h1M11 10.5h1M1 11.5h1M7 11.5h1"/><path stroke="#848200" d="M10 0.5h1M10 1.5h1"/><path stroke="#008284" d="M2 4.5h4M2 5.5h4M2 7.5h4M2 8.5h4M2 10.5h4M2 11.5h4"/></svg>
<svg style="left:439px;top:76px" width="16" height="15" shape-rendering="crispEdges"><path stroke="#000" d="M0 0.5h11M0 1.5h1M12 1.5h1M0 2.5h1M12 2.5h2M0 3.5h1M14 3.5h1M0 4.5h1M14 4.5h1M0 5.5h1M14 5.5h1M0 6.5h1M14 6.5h1M0 7.5h1M14 7.5h1M0 8.5h1M14 8.5h1M0 9.5h1M14 9.5h1M0 10.5h1M14 10.5h1M0 11.5h1M14 11.5h1M0 12.5h1M14 12.5h1M0 13.5h1M14 13.5h1M0 14.5h15"/><path stroke="#848200" d="M11 0.5h1M11 1.5h1M11 2.5h1"/><path stroke="#c6c3c6" d="M12 0.5h2M13 1.5h1M14 2.5h1"/><path stroke="#fff" d="M1 1.5h10M1 2.5h10M1 3.5h13M1 4.5h13M1 5.5h13M1 6.5h13M1 7.5h13M1 8.5h13M1 9.5h13M1 10.5h13M1 11.5h13M1 12.5h13M1 13.5h12"/><path stroke="#848284" d="M13 13.5h1"/></svg>
<span class="t" style="left:442.63px;top:76.00px;line-height:15px;font-size:11px;font-weight:bold;font-family:'Liberation Sans',sans-serif;color:#000084;">T</span>
<svg style="left:462px;top:76px" width="16" height="15" shape-rendering="crispEdges"><path stroke="#000" d="M0 0.5h11M0 1.5h1M12 1.5h1M0 2.5h1M12 2.5h2M0 3.5h1M14 3.5h1M0 4.5h1M14 4.5h1M0 5.5h1M14 5.5h1M0 6.5h1M14 6.5h1M0 7.5h1M14 7.5h1M0 8.5h1M14 8.5h1M0 9.5h1M14 9.5h1M0 10.5h1M14 10.5h1M0 11.5h1M14 11.5h1M0 12.5h1M14 12.5h1M0 13.5h1M14 13.5h1M0 14.5h15"/><path stroke="#848200" d="M11 0.5h1M11 1.5h1M11 2.5h1"/><path stroke="#c6c3c6" d="M12 0.5h2M13 1.5h1M14 2.5h1"/><path stroke="#fff" d="M1 1.5h10M1 2.5h10M1 3.5h13M1 4.5h13M1 5.5h13M1 6.5h13M1 7.5h13M1 8.5h13M1 9.5h13M1 10.5h13M1 11.5h13M1 12.5h13M1 13.5h12"/><path stroke="#848284" d="M13 13.5h1"/></svg>
<span class="t" style="left:463.63px;top:76.00px;line-height:15px;font-size:11px;font-weight:bold;font-family:'Liberation Sans',sans-serif;color:#000084;">T</span>
<svg style="left:471px;top:82px" width="3" height="5" shape-rendering="crispEdges"><path stroke="#0000ff" d="M1 0.5h1M1 1.5h1M1 2.5h1M0 3.5h3M1 4.5h1"/></svg>
<svg style="left:485px;top:76px" width="16" height="15" shape-rendering="crispEdges"><path stroke="#000" d="M0 0.5h11M0 1.5h1M12 1.5h1M0 2.5h1M12 2.5h2M0 3.5h1M14 3.5h1M0 4.5h1M14 4.5h1M0 5.5h1M14 5.5h1M0 6.5h1M14 6.5h1M0 7.5h1M14 7.5h1M0 8.5h1M14 8.5h1M0 9.5h1M14 9.5h1M0 10.5h1M14 10.5h1M0 11.5h1M14 11.5h1M0 12.5h1M14 12.5h1M0 13.5h1M14 13.5h1M0 14.5h15"/><path stroke="#848200" d="M11 0.5h1M11 1.5h1M11 2.5h1"/><path stroke="#c6c3c6" d="M12 0.5h2M13 1.5h1M14 2.5h1"/><path stroke="#fff" d="M1 1.5h10M1 2.5h10M1 3.5h13M1 4.5h13M1 5.5h13M1 6.5h13M1 7.5h13M1 8.5h13M1 9.5h13M1 10.5h13M1 11.5h13M1 12.5h13M1 13.5h12"/><path stroke="#848284" d="M13 13.5h1"/></svg>
<span class="t" style="left:486.97px;top:74.80px;line-height:11px;font-size:7px;font-weight:bold;font-family:'Liberation Sans',sans-serif;color:#0000ff;">D</span>
<span class="t" style="left:492.47px;top:74.80px;line-height:11px;font-size:7px;font-weight:bold;font-family:'Liberation Sans',sans-serif;color:#ff0000;">K</span>
<svg style="left:488px;top:84px" width="9" height="5" shape-rendering="crispEdges"><path stroke="#000" d="M0 0.5h9M0 2.5h9M0 4.5h9"/></svg>
<svg style="left:516px;top:76px" width="16" height="15" shape-rendering="crispEdges"><path stroke="#000" d="M0 0.5h11M0 1.5h1M12 1.5h1M0 2.5h1M12 2.5h2M0 3.5h1M14 3.5h1M0 4.5h1M14 4.5h1M0 5.5h1M14 5.5h1M0 6.5h1M14 6.5h1M0 7.5h1M14 7.5h1M0 8.5h1M14 8.5h1M0 9.5h1M14 9.5h1M0 10.5h1M14 10.5h1M0 11.5h1M14 11.5h1M0 12.5h1M14 12.5h1M0 13.5h1M14 13.5h1M0 14.5h15"/><path stroke="#848200" d="M11 0.5h1M11 1.5h1M11 2.5h1"/><path stroke="#c6c3c6" d="M12 0.5h2M13 1.5h1M14 2.5h1"/><path stroke="#fff" d="M1 1.5h10M1 2.5h10M1 3.5h13M1 4.5h13M1 5.5h13M1 6.5h13M1 7.5h13M1 8.5h13M1 9.5h13M1 10.5h13M1 11.5h13M1 12.5h13M1 13.5h12"/><path stroke="#848284" d="M13 13.5h1"/></svg>
<span class="t" style="left:517.63px;top:74.50px;line-height:15px;font-size:11px;font-weight:bold;font-family:'Liberation Sans',sans-serif;color:#000084;">T</span>
<svg style="left:523px;top:81px" width="7" height="10" shape-rendering="crispEdges"><path stroke="#000" d="M0 0.5h1M0 1.5h1M0 3.5h1M0 4.5h1M0 6.5h1M0 7.5h1M0 9.5h1"/><path stroke="#008284" d="M1 0.5h6M1 1.5h6M1 3.5h6M1 4.5h6M1 6.5h6M1 7.5h6M1 9.5h6"/><path stroke="#fff" d="M1 2.5h5M1 5.5h5M1 8.5h5"/></svg>
<svg style="left:547px;top:76px" width="14" height="15"><path d="M2 2.500h6v-2.500l5.500 4.500-5.500 4.500v-2.500h-6z" fill="#00c000" stroke="#004000" stroke-width=".8"/><path d="M12 7.500h-6v-2.500l-5.500 4.500 5.500 4.500v-2.500h6z" fill="#e00000" stroke="#600000" stroke-width=".8"/></svg>
<svg style="left:577px;top:76px" width="16" height="15" shape-rendering="crispEdges"><path stroke="#ff0000" d="M0 0.5h2M4 0.5h2M0 1.5h2M4 1.5h1M2 2.5h2M2 3.5h2M0 4.5h2M4 4.5h2M11 4.5h2M0 5.5h2M4 5.5h1M11 5.5h2M2 6.5h2M9 6.5h2M13 6.5h1M2 7.5h2M9 7.5h2M13 7.5h1M0 8.5h2M4 8.5h1M11 8.5h2M0 9.5h2M11 9.5h2M2 10.5h2M10 10.5h1M13 10.5h1M2 11.5h1M13 11.5h1M0 12.5h2M12 12.5h1M0 13.5h2M12 13.5h1"/><path stroke="#ffff00" d="M2 0.5h2M2 1.5h2M0 2.5h2M4 2.5h1M0 3.5h2M4 3.5h2M2 4.5h2M9 4.5h2M13 4.5h1M2 5.5h2M9 5.5h2M13 5.5h1M0 6.5h2M4 6.5h1M11 6.5h2M0 7.5h2M4 7.5h1M11 7.5h2M2 8.5h2M9 8.5h2M13 8.5h1M2 9.5h2M10 9.5h1M13 9.5h1M0 10.5h2M11 10.5h2M0 11.5h2M11 11.5h2M13 12.5h1M13 13.5h1"/><path stroke="#000" d="M6 0.5h4M5 1.5h1M7 1.5h1M9 1.5h1M11 1.5h1M5 2.5h1M9 2.5h1M12 2.5h1M6 3.5h1M8 3.5h1M13 3.5h1M6 4.5h1M8 4.5h1M14 4.5h1M5 5.5h1M8 5.5h1M14 5.5h1M5 6.5h1M8 6.5h1M14 6.5h1M5 7.5h1M8 7.5h1M14 7.5h1M5 8.5h1M8 8.5h1M14 8.5h1M4 9.5h1M9 9.5h1M14 9.5h1M4 10.5h1M9 10.5h1M14 10.5h1M3 11.5h1M10 11.5h1M14 11.5h1M2 12.5h1M11 12.5h1M14 12.5h1M2 13.5h10M14 13.5h1M2 14.5h13"/><path stroke="#fff" d="M6 1.5h1M8 1.5h1M10 1.5h1M6 2.5h3M10 2.5h2M7 3.5h1M9 3.5h4M7 4.5h1M6 5.5h2M6 6.5h2M6 7.5h2M6 8.5h2M5 9.5h4M5 10.5h4M4 11.5h6M3 12.5h8"/></svg>
<svg style="left:600px;top:76px" width="16" height="13" shape-rendering="crispEdges"><path stroke="#000" d="M4 0.5h6M0 1.5h4M8 1.5h1M10 1.5h1M0 2.5h1M3 2.5h1M6 2.5h1M8 2.5h1M10 2.5h1M13 2.5h1M1 3.5h1M4 3.5h1M6 3.5h1M8 3.5h1M2 4.5h1M8 4.5h1M11 4.5h1M3 5.5h5M12 5.5h2M4 6.5h1M8 6.5h5M4 7.5h1M11 7.5h1M14 7.5h1M4 8.5h1M7 8.5h3M11 8.5h1M15 8.5h1M4 9.5h1M7 9.5h1M9 9.5h1M11 9.5h4M2 10.5h1M4 10.5h1M8 10.5h1M10 10.5h2M4 11.5h7M0 12.5h5"/><path stroke="#000084" d="M11 0.5h4M11 1.5h4M11 2.5h2M14 2.5h1M11 3.5h4M12 4.5h3"/><path stroke="#ffff00" d="M4 1.5h4M4 2.5h2M7 2.5h1M5 3.5h1M7 3.5h1M5 4.5h3M5 6.5h3M5 7.5h6M5 8.5h2M10 8.5h1M5 9.5h2M10 9.5h1M5 10.5h3M9 10.5h1"/><path stroke="#fff" d="M9 1.5h1M1 2.5h2M9 2.5h1M2 3.5h2M9 3.5h2M3 4.5h2M9 4.5h2M8 5.5h4M12 7.5h2M12 8.5h3"/><path stroke="#840000" d="M0 7.5h4M0 8.5h4M0 9.5h4M0 10.5h2M3 10.5h1M0 11.5h4"/></svg>
<svg style="left:631px;top:77px" width="16" height="13" shape-rendering="crispEdges"><path stroke="#000" d="M5 0.5h6M4 1.5h1M11 1.5h1M3 2.5h1M12 2.5h1M2 3.5h1M13 3.5h1M1 4.5h1M14 4.5h1M0 5.5h1M15 5.5h1M0 6.5h1M15 6.5h1M0 7.5h1M6 7.5h4M15 7.5h1M0 8.5h1M4 8.5h2M10 8.5h2M15 8.5h1M0 9.5h1M3 9.5h1M12 9.5h1M15 9.5h1M0 10.5h1M2 10.5h1M13 10.5h1M15 10.5h1M0 11.5h2M14 11.5h2M0 12.5h16"/><path stroke="#fff" d="M5 1.5h1M10 1.5h1M4 2.5h1M11 2.5h1M3 3.5h1M12 3.5h1M2 4.5h2M12 4.5h2M1 5.5h4M11 5.5h4M1 6.5h5M10 6.5h5M1 7.5h5M10 7.5h5M1 8.5h3M6 8.5h4M12 8.5h3M1 9.5h2M4 9.5h8M13 9.5h2M1 10.5h1M3 10.5h10M14 10.5h1M2 11.5h12"/><path stroke="#ffff00" d="M6 1.5h4M5 2.5h6M4 3.5h8M4 4.5h8M5 5.5h6M6 6.5h4"/></svg>
<svg style="left:654px;top:76px" width="17" height="15"><circle cx="8" cy="7.500" r="7.500" fill="#0000c0"/><path d="M3 3l3-2 2 2-2 4-3 1zM10 8l3 0 1 3-3 2z" fill="#008200"/><path d="M1 11c2 2 5 3 8 2" stroke="#00ffff" fill="none"/><path d="M4 12L13.500 2.500l2.500 2.500L6.500 14z" fill="#fff" stroke="#000084" stroke-width=".5"/><path d="M12 3.500l1.500 1.500" stroke="#f00" stroke-width="1.500"/><path d="M4 12l2.500 2" stroke="#000" stroke-width="1.500"/></svg>
<svg style="left:2px;top:2px" width="17" height="15"><path d="M1 1l8 0 1-1 6 0 0 5-1 1 1 2-2 3-5 0-1 1-6 0-1-3 1-2-1-3z" fill="#ffff00"/><path d="M2 7l3-2 0 5" stroke="#f00" stroke-width="1.500" fill="none"/><path d="M3 9.500l2 2" stroke="#00f" stroke-width="1.200"/><path d="M10 4c-2-1-4 0-4 2s2 3 4 1l5-4" stroke="#f00" stroke-width="1.500" fill="none"/><path d="M10.500 3c-2-1.500-5-.5-5 2.500s3 3.500 5 1.500l5-4" stroke="#00f" stroke-width="1" fill="none"/></svg>
<span class="t" style="left:8.83px;top:9.60px;line-height:10px;font-size:6px;font-weight:bold;font-family:'Liberation Sans',sans-serif;">V7</span>
<svg style="left:7px;top:20px" width="13" height="16" shape-rendering="crispEdges"><path stroke="#848284" d="M0 0.5h10M0 1.5h1M0 2.5h1M0 3.5h1M0 4.5h1M0 5.5h1M0 6.5h1M0 7.5h1M0 8.5h1M0 9.5h1M0 10.5h1M0 11.5h1M0 12.5h1M0 13.5h1M0 14.5h1"/><path stroke="#000" d="M10 0.5h1M10 1.5h2M10 2.5h1M12 2.5h1M12 3.5h1M12 4.5h1M12 5.5h1M12 6.5h1M12 7.5h1M12 8.5h1M12 9.5h1M12 10.5h1M12 11.5h1M12 12.5h1M12 13.5h1M12 14.5h1M0 15.5h13"/><path stroke="#fff" d="M1 1.5h9M1 2.5h9M11 2.5h1M1 3.5h5M9 3.5h3M1 4.5h11M1 5.5h5M9 5.5h3M1 6.5h11M1 7.5h5M9 7.5h3M1 8.5h11M1 9.5h2M10 9.5h2M1 10.5h11M1 11.5h2M10 11.5h2M1 12.5h11M1 13.5h11M1 14.5h11"/><path stroke="#c6c3c6" d="M6 3.5h3M6 5.5h3M6 7.5h3M3 9.5h7M3 11.5h7"/></svg>
<span class="t" style="left:5.88px;top:17.00px;line-height:19px;font-size:15px;font-weight:bold;font-family:'Liberation Sans',sans-serif;color:#ff0000;">A</span>
<svg style="left:15px;top:655px" width="14" height="14"><path d="M2 2l11.500 11.500" stroke="#fff"/><path d="M1 1l11.500 11.500" stroke="#848284"/></svg>
<svg style="left:38px;top:657px" width="14" height="10" shape-rendering="crispEdges"><rect x="1.500" y="1.500" width="12" height="8" fill="none" stroke="#fff"/><rect x=".5" y=".5" width="12" height="8" fill="none" stroke="#848284"/></svg>
<svg style="left:61px;top:655px" width="14" height="14" shape-rendering="crispEdges"><path stroke="#848284" d="M0 0.5h13M0 1.5h1M12 1.5h1M0 2.5h1M2 2.5h9M12 2.5h1M0 3.5h1M12 3.5h1M0 4.5h1M2 4.5h8M12 4.5h1M0 5.5h1M12 5.5h1M0 6.5h1M2 6.5h9M12 6.5h1M0 7.5h1M12 7.5h1M0 8.5h1M2 8.5h8M12 8.5h1M0 9.5h1M12 9.5h1M0 10.5h1M2 10.5h9M12 10.5h1M0 11.5h1M12 11.5h1M0 12.5h12"/><path stroke="#fff" d="M1 1.5h11M13 1.5h1M1 2.5h1M11 2.5h1M13 2.5h1M1 3.5h11M13 3.5h1M1 4.5h1M10 4.5h2M13 4.5h1M1 5.5h11M13 5.5h1M1 6.5h1M11 6.5h1M13 6.5h1M1 7.5h11M13 7.5h1M1 8.5h1M10 8.5h2M13 8.5h1M1 9.5h11M13 9.5h1M1 10.5h1M11 10.5h1M13 10.5h1M1 11.5h11M13 11.5h1M12 12.5h2M1 13.5h13"/></svg>
<svg style="left:85px;top:656px" width="13" height="12" shape-rendering="crispEdges"><path stroke="#848284" d="M0 0.5h12M0 1.5h1M11 1.5h1M0 2.5h1M11 2.5h1M0 3.5h1M11 3.5h1M0 4.5h1M4 4.5h1M11 4.5h1M0 5.5h1M3 5.5h3M11 5.5h1M0 6.5h1M2 6.5h5M11 6.5h1M0 7.5h8M11 7.5h1M0 8.5h9M11 8.5h1M0 9.5h10M11 9.5h1M0 10.5h12"/><path stroke="#fff" d="M12 0.5h1M12 1.5h1M12 2.5h1M12 3.5h1M12 4.5h1M12 5.5h1M12 6.5h1M8 7.5h1M12 7.5h1M9 8.5h1M12 8.5h1M10 9.5h1M12 9.5h1M12 10.5h1M0 11.5h13"/><path stroke="#a5a2a5" d="M1 1.5h6M8 1.5h1M10 1.5h1M1 2.5h7M9 2.5h1M1 3.5h6M8 3.5h1M10 3.5h1M1 4.5h3M5 4.5h3M9 4.5h1M1 5.5h2M6 5.5h3M10 5.5h1M1 6.5h1M7 6.5h4M9 7.5h2M10 8.5h1"/><path stroke="#c6c3c6" d="M7 1.5h1M9 1.5h1M8 2.5h1M10 2.5h1M7 3.5h1M9 3.5h1M8 4.5h1M10 4.5h1M9 5.5h1"/></svg>
<svg style="left:106px;top:654px" width="16" height="14" shape-rendering="crispEdges"><path stroke="#a5a2a5" d="M0 0.5h7M8 0.5h7M0 1.5h6M9 1.5h6M0 2.5h5M10 2.5h5M0 3.5h4M11 3.5h4M0 4.5h3M12 4.5h3M0 5.5h2M13 5.5h2M0 6.5h3M12 6.5h3M0 7.5h4M11 7.5h4M0 8.5h5M10 8.5h5M0 9.5h6M9 9.5h6M1 10.5h6M8 10.5h6"/><path stroke="#848284" d="M7 0.5h1M6 1.5h3M5 2.5h5M4 3.5h7M3 4.5h9M2 5.5h11M3 6.5h9M4 7.5h7M5 8.5h5M6 9.5h3M0 10.5h1M7 10.5h1M14 10.5h1M0 11.5h15M0 12.5h15"/><path stroke="#fff" d="M15 7.5h1M15 8.5h1M15 9.5h1M15 10.5h1M15 11.5h1M15 12.5h1M1 13.5h15"/></svg>
<svg style="left:129px;top:654px" width="16" height="14" shape-rendering="crispEdges"><path stroke="#848284" d="M4 0.5h4M4 1.5h4M9 1.5h3M3 2.5h11M3 3.5h11M3 4.5h11M2 5.5h12M2 6.5h12M2 7.5h12M0 8.5h15M0 9.5h15M0 10.5h15M0 11.5h1M5 11.5h7M14 11.5h1M0 12.5h14"/><path stroke="#a5a2a5" d="M1 1.5h1M1 2.5h1M0 3.5h2M0 4.5h2M0 5.5h2M0 6.5h2M0 7.5h2"/><path stroke="#fff" d="M14 4.5h1M14 5.5h1M14 6.5h1M14 7.5h1M15 8.5h1M15 9.5h1M15 10.5h1M1 11.5h4M12 11.5h2M15 11.5h1M14 12.5h2M1 13.5h14"/></svg>
<svg style="left:163px;top:653px" width="12" height="17"><path d="M1.500 1v12l3-3 2.500 5.500 2-1-2.500-5.200h4z" fill="#fff" stroke="#000" stroke-width="1" stroke-linejoin="miter"/></svg>
<svg style="left:191px;top:655px" width="16" height="14" shape-rendering="crispEdges"><path stroke="#848284" d="M0 0.5h15M0 1.5h1M4 1.5h1M10 1.5h1M14 1.5h1M0 2.5h1M4 2.5h1M10 2.5h1M14 2.5h1M0 3.5h14M0 4.5h1M2 4.5h1M6 4.5h3M12 4.5h1M14 4.5h1M0 5.5h3M5 5.5h1M8 5.5h1M11 5.5h3M0 6.5h1M2 6.5h1M6 6.5h3M12 6.5h1M14 6.5h1M0 7.5h14M0 8.5h1M4 8.5h1M10 8.5h1M14 8.5h1M0 9.5h1M4 9.5h1M10 9.5h1M14 9.5h1M0 10.5h15M0 11.5h1M7 11.5h1M14 11.5h1M0 12.5h15"/><path stroke="#fff" d="M1 1.5h3M5 1.5h5M11 1.5h3M15 1.5h1M1 2.5h3M5 2.5h5M11 2.5h3M15 2.5h1M14 3.5h2M1 4.5h1M3 4.5h3M9 4.5h3M13 4.5h1M15 4.5h1M3 5.5h2M6 5.5h2M9 5.5h2M14 5.5h2M1 6.5h1M3 6.5h3M9 6.5h3M13 6.5h1M15 6.5h1M14 7.5h2M1 8.5h3M5 8.5h5M11 8.5h3M15 8.5h1M1 9.5h3M5 9.5h5M11 9.5h3M15 9.5h1M15 10.5h1M1 11.5h6M8 11.5h6M15 11.5h1M15 12.5h1M1 13.5h15"/></svg>
<svg style="left:226px;top:655px" width="7" height="13" shape-rendering="crispEdges"><path stroke="#848284" d="M0 0.5h6M0 1.5h2M0 2.5h2M0 3.5h2M0 4.5h2M0 5.5h2M0 6.5h2M0 7.5h2M0 8.5h2M0 9.5h2M0 10.5h2M0 11.5h6"/><path stroke="#fff" d="M6 0.5h1M2 1.5h5M2 2.5h1M2 3.5h1M2 4.5h1M2 5.5h1M2 6.5h1M2 7.5h1M2 8.5h1M2 9.5h1M2 10.5h1M6 11.5h1M1 12.5h6"/></svg>
<svg style="left:251px;top:655px" width="7" height="13" shape-rendering="crispEdges"><path stroke="#848284" d="M0 0.5h6M4 1.5h2M4 2.5h2M4 3.5h2M4 4.5h2M4 5.5h2M4 6.5h2M4 7.5h2M4 8.5h2M4 9.5h2M4 10.5h2M0 11.5h6"/><path stroke="#fff" d="M0 1.5h4M6 1.5h1M6 2.5h1M6 3.5h1M6 4.5h1M6 5.5h1M6 6.5h1M6 7.5h1M6 8.5h1M6 9.5h1M6 10.5h1M6 11.5h1M0 12.5h7"/></svg>
<svg style="left:270px;top:655px" width="11" height="12" shape-rendering="crispEdges"><path stroke="#000" d="M0 0.5h7M0 1.5h1M6 1.5h1M0 2.5h7M2 3.5h1M2 4.5h1M4 4.5h7M2 5.5h3M10 5.5h1M2 6.5h1M4 6.5h7M2 7.5h1M0 8.5h7M0 9.5h1M6 9.5h1M0 10.5h1M6 10.5h1M0 11.5h7"/><path stroke="#fff" d="M1 1.5h5M7 5.5h3M1 9.5h5M1 10.5h5"/><path stroke="#00ffff" d="M5 5.5h2"/></svg>
<svg style="left:299px;top:656px" width="15" height="11" shape-rendering="crispEdges"><path stroke="#848284" d="M0 0.5h15M0 1.5h1M2 1.5h1M4 1.5h1M6 1.5h1M8 1.5h1M10 1.5h1M12 1.5h1M14 1.5h1M0 2.5h15"/><path stroke="#c6c3c6" d="M1 1.5h1M3 1.5h1M5 1.5h1M7 1.5h1M9 1.5h1M11 1.5h1M13 1.5h1"/><path stroke="#000" d="M0 4.5h1M2 4.5h1M4 4.5h1M6 4.5h1M8 4.5h1M10 4.5h1M12 4.5h1M14 4.5h1M0 6.5h1M4 6.5h1M6 6.5h1M8 6.5h1M14 6.5h1M0 8.5h1M14 8.5h1M0 10.5h1M2 10.5h1M4 10.5h1M6 10.5h1M8 10.5h1M10 10.5h1M12 10.5h1M14 10.5h1"/></svg>
<svg style="left:322px;top:655px" width="17" height="12" shape-rendering="crispEdges"><path stroke="#000" d="M0 0.5h15M16 0.5h1M0 1.5h1M3 1.5h1M9 1.5h1M0 2.5h1M3 2.5h1M9 2.5h1M16 2.5h1M0 3.5h15M0 4.5h1M3 4.5h1M16 4.5h1M0 5.5h1M3 5.5h1M0 6.5h1M3 6.5h1M0 7.5h4M0 8.5h1M3 8.5h1M0 9.5h1M3 9.5h1M0 10.5h1M3 10.5h1M0 11.5h4"/><path stroke="#c6c3c6" d="M1 1.5h2M4 1.5h5M10 1.5h5M1 2.5h2M4 2.5h5M10 2.5h5M1 4.5h2M9 4.5h1M14 4.5h1M1 5.5h2M9 5.5h1M14 5.5h1M1 6.5h2M9 6.5h1M14 6.5h1M4 7.5h11M1 8.5h2M9 8.5h1M14 8.5h1M1 9.5h2M9 9.5h1M14 9.5h1M1 10.5h2M9 10.5h1M14 10.5h1"/><path stroke="#fff" d="M4 4.5h5M10 4.5h4M4 5.5h5M10 5.5h4M4 6.5h5M10 6.5h4M4 8.5h5M10 8.5h4M4 9.5h5M10 9.5h4M4 10.5h5M10 10.5h4"/></svg>
<svg style="left:345px;top:657px" width="16" height="10" shape-rendering="crispEdges"><path stroke="#000" d="M0 0.5h16M0 1.5h1M2 1.5h1M4 1.5h1M6 1.5h1M8 1.5h1M10 1.5h1M12 1.5h1M15 1.5h1M0 2.5h1M2 2.5h1M6 2.5h1M10 2.5h1M15 2.5h1M0 3.5h1M15 3.5h1M0 4.5h1M14 4.5h2M0 5.5h1M14 5.5h1M0 6.5h1M13 6.5h1M0 7.5h1M12 7.5h1M0 8.5h12M1 9.5h10"/><path stroke="#fff" d="M1 1.5h1M3 1.5h1M5 1.5h1M7 1.5h1M9 1.5h1M11 1.5h1M13 1.5h2M1 2.5h1M3 2.5h3M7 2.5h3M11 2.5h4M1 3.5h14M1 4.5h13M1 5.5h13M1 6.5h12M1 7.5h11"/></svg>
<svg style="left:376px;top:653px" width="18" height="18"><path d="M7.500 8.500h8v8h-8z" fill="none" stroke="#000" stroke-width="1.400"/><path d="M2 1.500l5 7" stroke="#c6c300" stroke-width="2.500"/><path d="M1.500 1l1.500 1.500" stroke="#000" stroke-width="2.500"/><path d="M1 15L14.500 3.500" stroke="#f00" stroke-width="2"/></svg>
<svg style="left:399px;top:655px" width="17" height="15" shape-rendering="crispEdges"><path d="M1.500 0v14M5.500 0v14M1.500 1.500h14M5.500 7.500h10" stroke="#000" stroke-width="1.300" fill="none"/></svg>
<svg style="left:4px;top:685px" width="16" height="13" shape-rendering="crispEdges"><path stroke="#000" d="M4 0.5h11M12 1.5h3M13 2.5h3M13 3.5h1M15 3.5h1M13 4.5h1M15 4.5h1M13 5.5h1M15 5.5h1M13 6.5h1M15 6.5h1M13 7.5h1M15 7.5h1M13 8.5h1M15 8.5h1M13 9.5h1M15 9.5h1M4 10.5h6M13 10.5h2M13 11.5h1"/><path stroke="#0000ff" d="M3 1.5h1M5 1.5h1M7 1.5h1M9 1.5h1M11 1.5h1M2 2.5h10M1 3.5h2M1 4.5h2M1 5.5h12M0 6.5h2M12 6.5h1M0 7.5h1M12 7.5h1M0 8.5h1M12 8.5h1M0 9.5h1M12 9.5h1M0 10.5h1M12 10.5h1M0 11.5h1M12 11.5h1M0 12.5h13"/><path stroke="#fff" d="M4 1.5h1M6 1.5h1M8 1.5h1M10 1.5h1M12 2.5h1M12 3.5h1M2 6.5h3M10 6.5h2M1 7.5h4M9 7.5h3M1 8.5h1M11 8.5h1M1 9.5h11M1 10.5h3M10 10.5h2M1 11.5h11"/><path stroke="#c6c3c6" d="M3 3.5h8M14 3.5h1M14 4.5h1M14 5.5h1M14 6.5h1M14 7.5h1M2 8.5h9M14 8.5h1M14 9.5h1"/><path stroke="#ffff00" d="M11 3.5h1M3 4.5h10"/><path stroke="#ff0000" d="M5 6.5h5M5 7.5h4"/></svg>
<svg style="left:233px;top:684px" width="13" height="15" shape-rendering="crispEdges"><path stroke="#848284" d="M0 0.5h10M0 1.5h1M0 2.5h1M0 3.5h1M0 4.5h1M0 5.5h1M0 6.5h1M0 7.5h1M0 8.5h1M0 9.5h1M0 10.5h1M0 11.5h1M0 12.5h1M0 13.5h1"/><path stroke="#000" d="M10 0.5h1M10 1.5h2M10 2.5h1M12 2.5h1M12 3.5h1M12 4.5h1M12 5.5h1M12 6.5h1M12 7.5h1M12 8.5h1M12 9.5h1M12 10.5h1M12 11.5h1M12 12.5h1M12 13.5h1M0 14.5h13"/><path stroke="#fff" d="M1 1.5h9M1 2.5h9M11 2.5h1M1 3.5h5M9 3.5h3M1 4.5h11M1 5.5h5M9 5.5h3M1 6.5h11M1 7.5h5M9 7.5h3M1 8.5h11M1 9.5h2M10 9.5h2M1 10.5h11M1 11.5h2M10 11.5h2M1 12.5h11M1 13.5h11"/><path stroke="#c6c3c6" d="M6 3.5h3M6 5.5h3M6 7.5h3M3 9.5h7M3 11.5h7"/></svg>
<span class="t" style="left:231.88px;top:681.00px;line-height:19px;font-size:15px;font-weight:bold;font-family:'Liberation Sans',sans-serif;color:#ff0000;">A</span>
<svg style="left:911px;top:684px" width="13" height="15" shape-rendering="crispEdges"><path stroke="#848284" d="M0 0.5h10M0 1.5h1M0 2.5h1M0 3.5h1M0 4.5h1M0 5.5h1M0 6.5h1M0 7.5h1M0 8.5h1M0 9.5h1M0 10.5h1M0 11.5h1M0 12.5h1M0 13.5h1"/><path stroke="#000" d="M10 0.5h1M10 1.5h2M10 2.5h1M12 2.5h1M12 3.5h1M12 4.5h1M12 5.5h1M12 6.5h1M12 7.5h1M12 8.5h1M12 9.5h1M12 10.5h1M12 11.5h1M12 12.5h1M12 13.5h1M0 14.5h13"/><path stroke="#fff" d="M1 1.5h9M1 2.5h9M11 2.5h1M1 3.5h5M9 3.5h3M1 4.5h11M1 5.5h5M9 5.5h3M1 6.5h11M1 7.5h5M9 7.5h3M1 8.5h11M1 9.5h2M10 9.5h2M1 10.5h11M1 11.5h2M10 11.5h2M1 12.5h11M1 13.5h11"/><path stroke="#c6c3c6" d="M6 3.5h3M6 5.5h3M6 7.5h3M3 9.5h7M3 11.5h7"/></svg>
<span class="t" style="left:909.88px;top:681.00px;line-height:19px;font-size:15px;font-weight:bold;font-family:'Liberation Sans',sans-serif;color:#ff0000;">A</span>
<svg style="left:458px;top:685px" width="13" height="14" shape-rendering="crispEdges"><path stroke="#848200" d="M0 0.5h9M0 1.5h1M8 1.5h1M0 2.5h1M8 2.5h1M0 3.5h1M0 4.5h1M0 5.5h1M0 6.5h1M0 7.5h1M0 8.5h1M0 9.5h1M0 10.5h1M0 11.5h1M0 12.5h1"/><path stroke="#fff" d="M1 1.5h7M1 2.5h7M1 3.5h10M1 4.5h10M1 5.5h10M1 6.5h10M1 7.5h10M1 8.5h8M10 8.5h1M1 9.5h7M1 10.5h8M10 10.5h1M1 11.5h10M1 12.5h10"/><path stroke="#000" d="M9 1.5h1M9 2.5h2M11 3.5h1M11 4.5h1M11 5.5h1M11 6.5h1M11 7.5h1M11 8.5h1M11 9.5h1M11 10.5h1M11 11.5h1M11 12.5h1M0 13.5h12"/><path stroke="#008200" d="M9 8.5h1M8 9.5h3M9 10.5h1"/></svg>
<span class="t" style="left:458.77px;top:683.00px;line-height:16px;font-size:12px;font-weight:bold;font-family:'Liberation Serif',serif;">Σ</span>
<svg style="left:685px;top:685px" width="12" height="14" shape-rendering="crispEdges"><path stroke="#000" d="M0 0.5h9M0 1.5h1M8 1.5h2M0 2.5h1M8 2.5h1M10 2.5h1M0 3.5h1M2 3.5h5M8 3.5h4M0 4.5h1M11 4.5h1M0 5.5h1M2 5.5h8M11 5.5h1M0 6.5h1M11 6.5h1M0 7.5h1M2 7.5h8M11 7.5h1M0 8.5h1M11 8.5h1M0 9.5h1M2 9.5h8M11 9.5h1M0 10.5h1M11 10.5h1M0 11.5h1M2 11.5h8M11 11.5h1M0 12.5h1M11 12.5h1M0 13.5h12"/><path stroke="#fff" d="M1 1.5h7M1 2.5h7M9 2.5h1M1 3.5h1M7 3.5h1M1 4.5h10M1 5.5h1M10 5.5h1M1 6.5h10M1 7.5h1M10 7.5h1M1 8.5h10M1 9.5h1M10 9.5h1M1 10.5h10M1 11.5h1M10 11.5h1M1 12.5h10"/></svg>
<svg style="left:4px;top:738px" width="16" height="15"><path d="M2 2.500c2-1.500 3.500-1.500 5.500-.5l-1.300 5c-2-1-3.500-1-5.500.5z" fill="#e8452c"/><path d="M8.500 2.500c2 1 3.500 1 5.500-.5l-1.300 5c-2 1.500-3.500 1.500-5.500.5z" fill="#6cbb3c"/><path d="M.5 8.500c2-1.500 3.500-1.500 5.500-.5l-1.300 5c-2-1-3.500-1-5.500.5z" fill="#3a8fe0"/><path d="M7 8.500c2 1 3.500 1 5.500-.5l-1.300 5c-2 1.500-3.500 1.500-5.500.5z" fill="#f6b622"/></svg>
<svg style="left:77px;top:732px" width="34" height="28"><path d="M4 5l8-1 2-2 12-1 8 3-1 7-3 2 0 5-8 2-4 4-10 1-4-4 1-6-2-4z" fill="#ffff00"/><path d="M1 15l5-3 5 11" stroke="#0000ff" stroke-width="2.200" fill="none"/><path d="M2.500 14l4-2.500 4.500 10" stroke="#ff0000" stroke-width="1.600" fill="none"/><path d="M7 11l5 11" stroke="#c6c3c6" stroke-width="1.200" fill="none"/><path d="M21 8c-4-3-9-1-9 4s5 6 9 3l12-8" stroke="#0000ff" stroke-width="2.400" fill="none"/><path d="M21 9.500c-3-2.500-7.500-1-7.500 2.500s4 4.500 7.500 2l12-8.500" stroke="#ff0000" stroke-width="1.600" fill="none"/></svg>
<span class="t" style="left:91.22px;top:755.30px;line-height:11px;font-size:7px;font-weight:bold;font-family:'Liberation Sans',sans-serif;">V7</span>
<span class="t" style="left:135.81px;top:724.00px;line-height:34px;font-size:30px;font-family:'DejaVu Sans',sans-serif;">ج</span>
<svg style="left:180px;top:731px" width="33" height="32"><defs><linearGradient id="pg" x1="0" y1="0" x2="1" y2="1"><stop offset="0" stop-color="#fff"/><stop offset="1" stop-color="#9cc4f0"/></linearGradient><linearGradient id="og" x1="0" y1="0" x2="0" y2="1"><stop offset="0" stop-color="#f9b25a"/><stop offset=".5" stop-color="#e8701a"/><stop offset="1" stop-color="#f4a040"/></linearGradient></defs><path d="M9.500 1.500h15l7 7v22h-22z" fill="url(#pg)" stroke="#2a62b8" stroke-width="1.200"/><path d="M24.500 1.500v7h7" fill="#d8e8fa" stroke="#2a62b8"/><path d="M12 5h10M12 7.500h10M12 10h12M12 22h17M12 24.500h17M12 27h17" stroke="#6a9ee0" stroke-width="1"/><rect x="13" y="12" width="18" height="8" fill="#fbd36a" stroke="#e8901a" stroke-width=".8"/><path d="M14 14.500h16M14 17.500h16" stroke="#f4b030"/><path d="M.5 12.500h7v-5l8.500 8.500-8.500 8.500v-5h-7z" fill="url(#og)" stroke="#c85a10" stroke-width=".8"/></svg>
<svg style="left:234px;top:732px" width="24" height="30"><defs><linearGradient id="cg" x1="0" y1="0" x2="1" y2="1"><stop offset="0" stop-color="#a8d0f4"/><stop offset="1" stop-color="#5a9ad8"/></linearGradient></defs><rect x=".5" y=".5" width="22" height="29" rx="2" fill="url(#cg)" stroke="#3a78c0"/><rect x="2.500" y="2.500" width="18" height="2" fill="#f4a030"/><rect x="2.500" y="5" width="18" height="8" fill="#d6e6f6" stroke="#4a88c8" stroke-width=".6"/><text x="17" y="12" font-size="8" font-family="Liberation Mono,monospace" fill="#3a68b0" text-anchor="middle">0</text><rect x="3" y="16.0" width="3" height="2.500" fill="#3a78c0"/><rect x="3" y="19.5" width="3" height="2.500" fill="#e8f0f8"/><rect x="3" y="23.0" width="3" height="2.500" fill="#e8f0f8"/><rect x="3" y="26.5" width="3" height="2.500" fill="#e8f0f8"/><rect x="7" y="16.0" width="3" height="2.500" fill="#3a78c0"/><rect x="7" y="19.5" width="3" height="2.500" fill="#e8f0f8"/><rect x="7" y="23.0" width="3" height="2.500" fill="#e8f0f8"/><rect x="7" y="26.5" width="3" height="2.500" fill="#e8f0f8"/><rect x="11" y="16.0" width="3" height="2.500" fill="#3a78c0"/><rect x="11" y="19.5" width="3" height="2.500" fill="#e8f0f8"/><rect x="11" y="23.0" width="3" height="2.500" fill="#e8f0f8"/><rect x="11" y="26.5" width="3" height="2.500" fill="#e8f0f8"/><rect x="15" y="16.0" width="3" height="2.500" fill="#3a78c0"/><rect x="15" y="19.5" width="3" height="2.500" fill="#e8f0f8"/><rect x="15" y="23.0" width="3" height="2.500" fill="#e8f0f8"/><rect x="15" y="26.5" width="3" height="2.500" fill="#e8f0f8"/><rect x="19" y="16.0" width="3" height="2.500" fill="#3a78c0"/><rect x="19" y="19.5" width="3" height="2.500" fill="#e8f0f8"/><rect x="19" y="23.0" width="3" height="2.500" fill="#f4a030"/><rect x="19" y="26.5" width="3" height="2.500" fill="#f4a030"/></svg>
<svg style="left:280px;top:734px" width="33" height="30"><defs><linearGradient id="fg" x1="0" y1="0" x2="0" y2="1"><stop offset="0" stop-color="#fbe9a8"/><stop offset="1" stop-color="#efc95c"/></linearGradient><linearGradient id="sg" x1="0" y1="0" x2="0" y2="1"><stop offset="0" stop-color="#d0f0fc"/><stop offset="1" stop-color="#4aa8dc"/></linearGradient></defs><path d="M1.500 3.500l2-2h9l2 2h15l2 2v18l-2 2h-26l-2-2z" fill="#f3d47a" stroke="#d8b048"/><rect x="4" y="1.500" width="9" height="3" fill="#fff"/><rect x="5" y="2" width="3" height="2" fill="#20b040"/><rect x="12" y="3.500" width="9" height="3" fill="#fff"/><rect x="13" y="4" width="3" height="2" fill="#e03020"/><rect x="20" y="5.500" width="9" height="3" fill="#fff"/><rect x="21" y="6" width="3" height="2" fill="#2090f0"/><path d="M1.500 9.500h30v14l-2 2h-26l-2-2z" fill="url(#fg)" stroke="#d8b048"/><path d="M5 28.500v-9c0-2 1-3 3-3h17c2 0 3 1 3 3v9h-6v-6h-11v6z" fill="url(#sg)" stroke="#3a98d0" stroke-width=".8" opacity=".92"/><path d="M6 17l3-3M7.500 18.500l-3-5" stroke="#fff" stroke-width=".8"/></svg>
<svg style="left:1181px;top:737px" width="17" height="16"><path d="M4.500 5.500c1-3 3-1 5-2s2-3 4-3" stroke="#848284" fill="none"/><rect x=".5" y="5.500" width="16" height="9" rx="1.500" fill="#c6c3c6" stroke="#848284"/><path d="M2.500 8h12M2.500 10h12" stroke="#848284" stroke-dasharray="1 1"/><path d="M4 12.500h9" stroke="#848284"/></svg>
<svg style="left:1210px;top:740px" width="8" height="10"><path d="M1 4.500l3-3 3 3M1 9l3-3 3 3" stroke="#000" stroke-width="1.300" fill="none"/></svg>
<svg style="left:1227px;top:739px" width="17" height="16"><rect x="5.500" y="2.500" width="10" height="12" fill="#c6c3c6" stroke="#848284"/><path d="M2.500 0v4M5.500 0v4M1.500 3.500h5v4h-5zM4 7.500v8" stroke="#424142" fill="#fff"/><path d="M11 6.500l5.500 9h-11z" fill="#ffd800" stroke="#c09000" stroke-width=".6"/><path d="M11 9.500v3M11 13.500v1" stroke="#000" stroke-width="1.200"/></svg>
<svg style="left:1251px;top:739px" width="17" height="16"><path d="M.5 5.500h2.500l4-4.500v13l-4-4.500h-2.500z" fill="#fff" stroke="#848284"/><path d="M1 6h2l3.500-4v11" fill="none" stroke="#c6c3c6"/><circle cx="11" cy="10.500" r="5" fill="#e02020"/><path d="M8.800 8.300l4.400 4.400M13.200 8.300l-4.400 4.400" stroke="#fff" stroke-width="1.600"/></svg>
<svg style="left:1344px;top:741px" width="16" height="13"><defs><linearGradient id="dg" x1="0" y1="0" x2="1" y2="1"><stop offset="0" stop-color="#3a7ee0"/><stop offset="1" stop-color="#1a50b0"/></linearGradient></defs><rect x=".5" y=".5" width="15" height="12" fill="url(#dg)" stroke="#6a9ee8"/><rect x="1" y="9.500" width="14" height="2.500" fill="#10204a"/><rect x="1.500" y="9.500" width="2.500" height="2.500" fill="#e8a020"/></svg>
</div></body></html>
